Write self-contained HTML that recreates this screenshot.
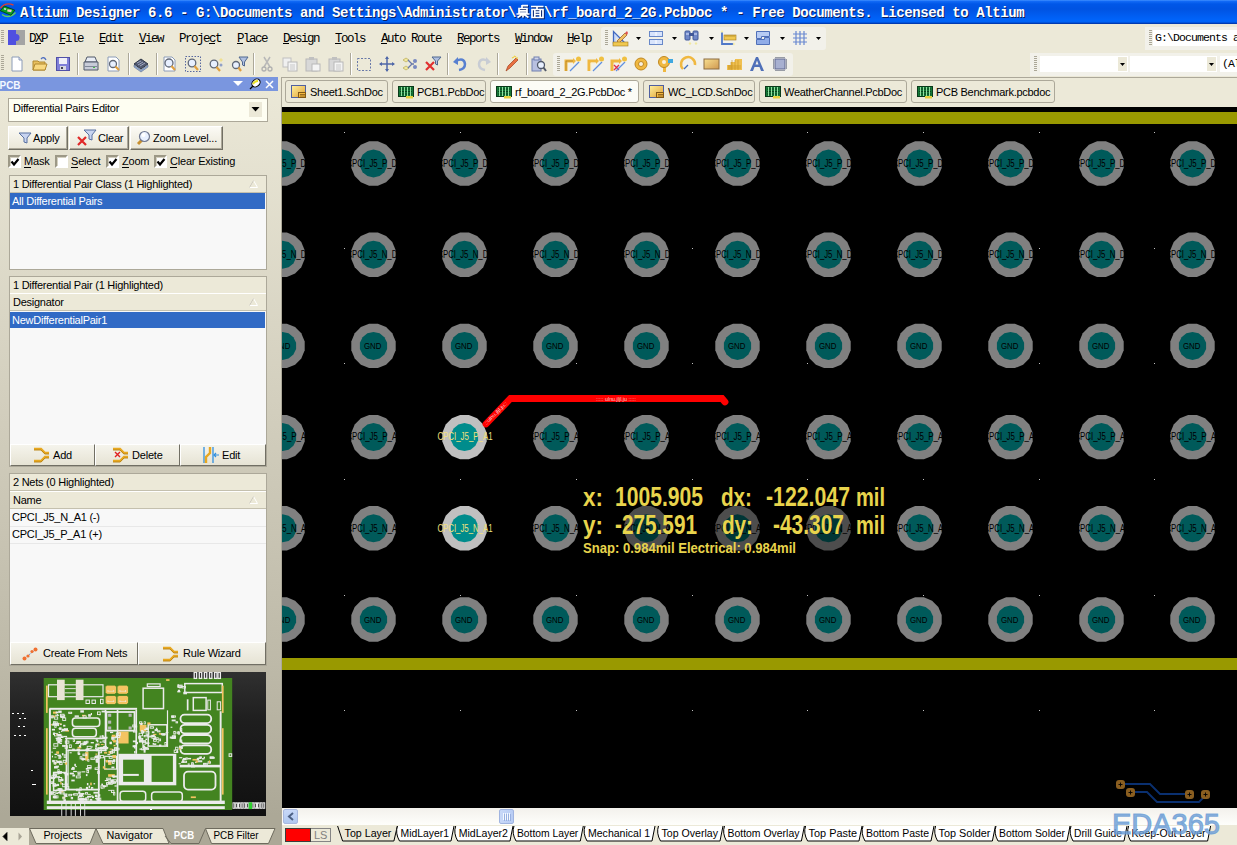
<!DOCTYPE html><html><head><meta charset="utf-8"><style>
html,body{margin:0;padding:0;width:1237px;height:845px;overflow:hidden;}
body{position:relative;background:#ECE9D8;font-family:'Liberation Sans', sans-serif;}
div{box-sizing:border-box;}
svg{position:absolute;overflow:visible;}
</style></head><body>
<div style="position:absolute;left:0px;top:0px;width:1237px;height:24px;background:linear-gradient(to bottom,#4090FF 0px,#1068F5 1.5px,#0057E8 4px,#0053E2 9px,#005CF0 15px,#0064FA 20px,#0062F6 22px,#0044C4 23px,#0030A0 24px);"></div>
<svg style="left:0;top:0" width="18" height="20" viewBox="0 0 18 20">
<path d="M0.5 8 Q6 1.5 13.5 5.2" stroke="#E04030" stroke-width="1.4" fill="none"/>
<path d="M2 14.5 Q9 19.5 15.5 12.5" stroke="#60D060" stroke-width="1.4" fill="none"/>
<path d="M0.3 10.8 L4.3 6 L14.8 10.2 L11 15.3 Z" fill="#08A020" stroke="#003000" stroke-width="0.7"/>
<path d="M4 8.2 L6.3 8.4 L6 9.8 L3.8 9.6Z" fill="#F8F0FF"/><path d="M7.5 9.3 L11.8 9.8 L11.2 12.2 L7.2 11.6Z" fill="#F8C8C8"/>
</svg>
<div style="position:absolute;left:21px;top:7px;color:#0A1E60;font:bold 14px/14px 'Liberation Mono', monospace;letter-spacing:-0.4px;white-space:pre;">Altium Designer 6.6 - G:\Documents and Settings\Administrator\<span style="display:inline-block;width:28px"></span>\rf_board_2_2G.PcbDoc * - Free Documents. Licensed to Altium</div>
<div style="position:absolute;left:20px;top:6px;color:#FFFFFF;font:bold 14px/14px 'Liberation Mono', monospace;letter-spacing:-0.4px;white-space:pre;">Altium Designer 6.6 - G:\Documents and Settings\Administrator\<span style="display:inline-block;width:28px"></span>\rf_board_2_2G.PcbDoc * - Free Documents. Licensed to Altium</div>
<svg style="left:516px;top:4px" width="30" height="16" viewBox="0 0 30 16">
<path d="M6 1V4M6 1.6H12M3 4.5H11V9H3ZM3 6.8H11M0.5 10H13.5M7 10V13.5M6 10.5L1.5 13.5M8 10.5L12.5 13.5M15 2.5H27.5M21 2.5V5M16 5.5H27V13.5H16ZM18.8 5.5V13.5M24.2 5.5V13.5M19 8H24M19 10.5H24" transform="translate(1,1)" fill="none" stroke="#0A246A" stroke-width="1.7"/>
<path d="M6 1V4M6 1.6H12M3 4.5H11V9H3ZM3 6.8H11M0.5 10H13.5M7 10V13.5M6 10.5L1.5 13.5M8 10.5L12.5 13.5M15 2.5H27.5M21 2.5V5M16 5.5H27V13.5H16ZM18.8 5.5V13.5M24.2 5.5V13.5M19 8H24M19 10.5H24" fill="none" stroke="#FFF" stroke-width="1.7"/></svg>
<svg style="left:1px;top:30px" width="3" height="15"><rect x="0" y="0" width="3" height="1" fill="#ABA797"/><rect x="0" y="2" width="3" height="1" fill="#ABA797"/><rect x="0" y="4" width="3" height="1" fill="#ABA797"/><rect x="0" y="6" width="3" height="1" fill="#ABA797"/><rect x="0" y="8" width="3" height="1" fill="#ABA797"/><rect x="0" y="10" width="3" height="1" fill="#ABA797"/><rect x="0" y="12" width="3" height="1" fill="#ABA797"/></svg>
<svg style="left:8px;top:30px" width="17" height="15" viewBox="0 0 17 15">
<rect x="0" y="0" width="8" height="15" fill="#5050E0"/><rect x="8" y="0" width="9" height="15" fill="#A4A4A4"/>
<path d="M8 4 A3.5 3.5 0 0 1 8 11 Z" fill="#5050E0"/>
</svg>
<div style="position:absolute;left:29px;top:33px;font:normal 12.5px/12px 'Liberation Mono', monospace;letter-spacing:-1.5px;color:#000;white-space:pre;">DXP</div>
<div style="position:absolute;left:35px;top:43px;width:6px;height:1px;background:#000;"></div>
<div style="position:absolute;left:59px;top:33px;font:normal 12.5px/12px 'Liberation Mono', monospace;letter-spacing:-1.5px;color:#000;white-space:pre;">File</div>
<div style="position:absolute;left:59px;top:43px;width:6px;height:1px;background:#000;"></div>
<div style="position:absolute;left:99px;top:33px;font:normal 12.5px/12px 'Liberation Mono', monospace;letter-spacing:-1.5px;color:#000;white-space:pre;">Edit</div>
<div style="position:absolute;left:99px;top:43px;width:6px;height:1px;background:#000;"></div>
<div style="position:absolute;left:139px;top:33px;font:normal 12.5px/12px 'Liberation Mono', monospace;letter-spacing:-1.5px;color:#000;white-space:pre;">View</div>
<div style="position:absolute;left:139px;top:43px;width:6px;height:1px;background:#000;"></div>
<div style="position:absolute;left:179px;top:33px;font:normal 12.5px/12px 'Liberation Mono', monospace;letter-spacing:-1.5px;color:#000;white-space:pre;">Project</div>
<div style="position:absolute;left:209px;top:43px;width:6px;height:1px;background:#000;"></div>
<div style="position:absolute;left:237px;top:33px;font:normal 12.5px/12px 'Liberation Mono', monospace;letter-spacing:-1.5px;color:#000;white-space:pre;">Place</div>
<div style="position:absolute;left:237px;top:43px;width:6px;height:1px;background:#000;"></div>
<div style="position:absolute;left:283px;top:33px;font:normal 12.5px/12px 'Liberation Mono', monospace;letter-spacing:-1.5px;color:#000;white-space:pre;">Design</div>
<div style="position:absolute;left:283px;top:43px;width:6px;height:1px;background:#000;"></div>
<div style="position:absolute;left:335px;top:33px;font:normal 12.5px/12px 'Liberation Mono', monospace;letter-spacing:-1.5px;color:#000;white-space:pre;">Tools</div>
<div style="position:absolute;left:335px;top:43px;width:6px;height:1px;background:#000;"></div>
<div style="position:absolute;left:381px;top:33px;font:normal 12.5px/12px 'Liberation Mono', monospace;letter-spacing:-1.5px;color:#000;white-space:pre;">Auto Route</div>
<div style="position:absolute;left:381px;top:43px;width:6px;height:1px;background:#000;"></div>
<div style="position:absolute;left:457px;top:33px;font:normal 12.5px/12px 'Liberation Mono', monospace;letter-spacing:-1.5px;color:#000;white-space:pre;">Reports</div>
<div style="position:absolute;left:457px;top:43px;width:6px;height:1px;background:#000;"></div>
<div style="position:absolute;left:515px;top:33px;font:normal 12.5px/12px 'Liberation Mono', monospace;letter-spacing:-1.5px;color:#000;white-space:pre;">Window</div>
<div style="position:absolute;left:515px;top:43px;width:6px;height:1px;background:#000;"></div>
<div style="position:absolute;left:567px;top:33px;font:normal 12.5px/12px 'Liberation Mono', monospace;letter-spacing:-1.5px;color:#000;white-space:pre;">Help</div>
<div style="position:absolute;left:567px;top:43px;width:6px;height:1px;background:#000;"></div>
<svg style="left:1px;top:55px" width="3" height="16"><rect x="0" y="0" width="3" height="1" fill="#ABA797"/><rect x="0" y="2" width="3" height="1" fill="#ABA797"/><rect x="0" y="4" width="3" height="1" fill="#ABA797"/><rect x="0" y="6" width="3" height="1" fill="#ABA797"/><rect x="0" y="8" width="3" height="1" fill="#ABA797"/><rect x="0" y="10" width="3" height="1" fill="#ABA797"/><rect x="0" y="12" width="3" height="1" fill="#ABA797"/><rect x="0" y="14" width="3" height="1" fill="#ABA797"/></svg>
<svg width="0" height="0" style="left:0;top:0"><defs><linearGradient id="gfill" x1="0" y1="0" x2="1" y2="1"><stop offset="0" stop-color="#F8E090"/><stop offset="1" stop-color="#D09850"/></linearGradient></defs></svg>
<svg style="left:9px;top:56px" width="16" height="16" viewBox="0 0 16 16"><path d="M3 1H10L13 4V15H3Z" fill="#FFF" stroke="#8C9CB8" stroke-width="1"/><path d="M10 1V4H13" fill="#DDE" stroke="#8C9CB8"/></svg>
<svg style="left:32px;top:56px" width="16" height="16" viewBox="0 0 16 16"><path d="M1 5H6L7 6H13V14H1Z" fill="#E8C060" stroke="#B08830"/><path d="M3 8H15L13 14H1Z" fill="#F8D880" stroke="#B08830"/><path d="M9 3Q12 0 14 4" stroke="#5070C0" fill="none" stroke-width="1.3"/></svg>
<svg style="left:55px;top:56px" width="16" height="16" viewBox="0 0 16 16"><rect x="1.5" y="1.5" width="13" height="13" fill="#8080D8" stroke="#5050A8"/><rect x="4" y="2" width="8" height="6" fill="#F0F0F8"/><rect x="5" y="10" width="6" height="4" fill="#D8D8E0"/><rect x="6" y="11" width="2" height="2" fill="#404050"/></svg>
<div style="position:absolute;left:77px;top:53px;width:2px;height:22px;border-left:1px solid #ACA899;border-right:1px solid #FFFFFF;"></div>
<svg style="left:83px;top:56px" width="16" height="16" viewBox="0 0 16 16"><path d="M4 1H12L14 6H2Z" fill="#E8ECF4" stroke="#505868"/><path d="M1 6H15V14H1Z" fill="#C8CCD8" stroke="#505868"/><rect x="2" y="10" width="12" height="1" fill="#808898"/><rect x="10" y="11" width="2" height="1" fill="#40C040"/></svg>
<svg style="left:106px;top:56px" width="16" height="16" viewBox="0 0 16 16"><path d="M2 1H10L13 4V15H2Z" fill="#FFF" stroke="#8C9CB8"/><circle cx="7" cy="8" r="3.5" fill="#E8F0FF" stroke="#606878" stroke-width="1.3"/><path d="M9.5 10.5L13 14" stroke="#E0A040" stroke-width="2.2"/></svg>
<div style="position:absolute;left:128px;top:53px;width:2px;height:22px;border-left:1px solid #ACA899;border-right:1px solid #FFFFFF;"></div>
<svg style="left:133px;top:56px" width="16" height="16" viewBox="0 0 16 16"><path d="M1 8L8 3L15 8L8 13Z" fill="#505870" stroke="#303848"/><path d="M1 9L8 14L15 9V11L8 16L1 11Z" fill="#90A8D0" stroke="#607090" stroke-width="0.6"/><path d="M4 7L8 5M5 9L10 6M7 10L12 7" stroke="#A0A8C0"/></svg>
<div style="position:absolute;left:156px;top:53px;width:2px;height:22px;border-left:1px solid #ACA899;border-right:1px solid #FFFFFF;"></div>
<svg style="left:162px;top:56px" width="16" height="16" viewBox="0 0 16 16"><path d="M2 1H10L13 4V15H2Z" fill="#FFF" stroke="#8C9CB8"/><circle cx="7" cy="7" r="4" fill="#E8F0FF" stroke="#606878" stroke-width="1.3"/><path d="M9.5 10L13 14" stroke="#E0A040" stroke-width="2.2"/></svg>
<svg style="left:185px;top:56px" width="16" height="16" viewBox="0 0 16 16"><rect x="0.5" y="0.5" width="15" height="15" fill="none" stroke="#5868A0" stroke-dasharray="1.5 1.5"/><circle cx="7" cy="7" r="3.8" fill="#E8F0FF" stroke="#606878" stroke-width="1.3"/><path d="M9.5 10L13 14" stroke="#E0A040" stroke-width="2.2"/></svg>
<svg style="left:208px;top:56px" width="16" height="16" viewBox="0 0 16 16"><circle cx="6" cy="8" r="3.8" fill="#E8F0FF" stroke="#606878" stroke-width="1.3"/><path d="M8.5 11L12 15" stroke="#E0A040" stroke-width="2.2"/><path d="M13 2L15 4L13 6L11 4Z" fill="#F0E090"/><circle cx="13" cy="9" r="1.5" fill="#90A0C8"/></svg>
<svg style="left:231px;top:56px" width="16" height="16" viewBox="0 0 16 16"><circle cx="5" cy="9" r="3.5" fill="#E8F0FF" stroke="#606878" stroke-width="1.3"/><path d="M7.5 11.5L10 15" stroke="#E0A040" stroke-width="2.2"/><path d="M8 1H17L13.5 6V10L11.5 9V6Z" fill="#B0C0E0" stroke="#506890"/></svg>
<div style="position:absolute;left:253px;top:53px;width:2px;height:22px;border-left:1px solid #ACA899;border-right:1px solid #FFFFFF;"></div>
<svg style="left:259px;top:56px" width="16" height="16" viewBox="0 0 16 16"><path d="M5 1L11 11M11 1L5 11" stroke="#B8B8B8" stroke-width="1.5"/><circle cx="5" cy="13" r="2" fill="none" stroke="#B0B0B0" stroke-width="1.3"/><circle cx="11" cy="13" r="2" fill="none" stroke="#B0B0B0" stroke-width="1.3"/></svg>
<svg style="left:282px;top:56px" width="16" height="16" viewBox="0 0 16 16"><rect x="1" y="2" width="8" height="9" fill="#F0F0F0" stroke="#C0C0C0"/><rect x="6" y="6" width="9" height="9" fill="#F4F4F4" stroke="#B8B8B8"/><path d="M8 9H13M8 11H13M8 13H13" stroke="#C8C8C8"/></svg>
<svg style="left:305px;top:56px" width="16" height="16" viewBox="0 0 16 16"><rect x="1" y="3" width="11" height="12" fill="#D8D8D8" stroke="#B8B8B8"/><rect x="4" y="1" width="5" height="3" fill="#C0C0C0"/><rect x="7" y="8" width="8" height="7" fill="#F4F4F4" stroke="#B8B8B8"/></svg>
<svg style="left:328px;top:56px" width="16" height="16" viewBox="0 0 16 16"><rect x="1" y="3" width="11" height="12" fill="#D8D8D8" stroke="#B8B8B8"/><rect x="4" y="1" width="5" height="3" fill="#C0C0C0"/><rect x="6" y="6" width="9" height="9" fill="#F4F4F4" stroke="#B8B8B8"/><path d="M8 9H13M8 11H13M8 13H13" stroke="#C8C8C8"/></svg>
<div style="position:absolute;left:350px;top:53px;width:2px;height:22px;border-left:1px solid #ACA899;border-right:1px solid #FFFFFF;"></div>
<svg style="left:356px;top:56px" width="16" height="16" viewBox="0 0 16 16"><rect x="1.5" y="2.5" width="13" height="12" fill="none" stroke="#6878A8" stroke-dasharray="2 1.5"/></svg>
<svg style="left:379px;top:56px" width="16" height="16" viewBox="0 0 16 16"><path d="M8 1V15M1 8H15" stroke="#5068A8" stroke-width="1.5"/><path d="M8 0L6 3H10ZM8 16L6 13H10ZM0 8L3 6V10ZM16 8L13 6V10Z" fill="#5068A8"/></svg>
<svg style="left:402px;top:56px" width="16" height="16" viewBox="0 0 16 16"><path d="M1 4L4 2L7 4L4 6ZM1 12L4 10L7 12L4 14Z" fill="#F0E8A0" stroke="#B0A040" stroke-width="0.6"/><path d="M6 4L10 8L6 12M10 8H12" stroke="#6878A8" stroke-width="1.3" fill="none"/><circle cx="13" cy="5" r="2" fill="#7888C0"/><circle cx="13" cy="11" r="2" fill="#7888C0"/></svg>
<svg style="left:425px;top:56px" width="16" height="16" viewBox="0 0 16 16"><path d="M1 6L9 14M9 6L1 14" stroke="#E03030" stroke-width="2.2"/><path d="M7 1H16L12.5 5V9L10.5 8V5Z" fill="#B0C0E0" stroke="#506890"/></svg>
<div style="position:absolute;left:447px;top:53px;width:2px;height:22px;border-left:1px solid #ACA899;border-right:1px solid #FFFFFF;"></div>
<svg style="left:452px;top:56px" width="16" height="16" viewBox="0 0 16 16"><path d="M4 5Q12 1 13 8Q13 13 7 14" stroke="#5880D0" stroke-width="2.5" fill="none"/><path d="M1 6L6 1V9Z" fill="#5880D0"/></svg>
<svg style="left:476px;top:56px" width="16" height="16" viewBox="0 0 16 16"><path d="M12 5Q4 1 3 8Q3 13 9 14" stroke="#C8CCD4" stroke-width="2.5" fill="none"/><path d="M15 6L10 1V9Z" fill="#C8CCD4"/></svg>
<div style="position:absolute;left:497px;top:53px;width:2px;height:22px;border-left:1px solid #ACA899;border-right:1px solid #FFFFFF;"></div>
<svg style="left:504px;top:56px" width="16" height="16" viewBox="0 0 16 16"><path d="M2 15L4 10L12 2L14 4L6 12Z" fill="#E87040" stroke="#A04020" stroke-width="0.7"/><path d="M10 0L12 1M13 1V3M8 2L10 1" stroke="#F0D040" stroke-width="1.2"/></svg>
<div style="position:absolute;left:526px;top:53px;width:2px;height:22px;border-left:1px solid #ACA899;border-right:1px solid #FFFFFF;"></div>
<svg style="left:531px;top:56px" width="16" height="16" viewBox="0 0 16 16"><rect x="1" y="3" width="9" height="12" fill="#B8C0E0" stroke="#7080B0"/><rect x="3" y="1" width="5" height="3" fill="#D0D4E8" stroke="#7080B0"/><circle cx="10" cy="9" r="3.5" fill="#E8F0FF" stroke="#505868" stroke-width="1.3"/><path d="M12.5 11.5L15 15" stroke="#505868" stroke-width="2"/></svg>
<div style="position:absolute;left:553px;top:53px;width:240px;height:23px;background:#F2F1EA;border-radius:3px;"></div>
<svg style="left:557px;top:56px" width="3" height="16"><rect x="0" y="0" width="3" height="1" fill="#ABA797"/><rect x="0" y="2" width="3" height="1" fill="#ABA797"/><rect x="0" y="4" width="3" height="1" fill="#ABA797"/><rect x="0" y="6" width="3" height="1" fill="#ABA797"/><rect x="0" y="8" width="3" height="1" fill="#ABA797"/><rect x="0" y="10" width="3" height="1" fill="#ABA797"/><rect x="0" y="12" width="3" height="1" fill="#ABA797"/><rect x="0" y="14" width="3" height="1" fill="#ABA797"/></svg>
<svg style="left:564px;top:56px" width="16" height="16" viewBox="0 0 16 16"><path d="M2 15V5H10" stroke="#F0B840" stroke-width="3" fill="none"/><path d="M2 15V5H10" stroke="#A07020" stroke-width="0.6" fill="none"/><path d="M9 2L12 5L9 8Z" fill="#F0B840"/><path d="M6 15L15 6" stroke="#6090E0" stroke-width="1.3"/><circle cx="14.5" cy="3" r="2.5" fill="#F0C040"/></svg>
<svg style="left:587px;top:56px" width="16" height="16" viewBox="0 0 16 16"><path d="M2 15V5H10" stroke="#F0B840" stroke-width="3" fill="none"/><path d="M4 15V7H8" stroke="#FFF0C0" stroke-width="0.8" fill="none"/><path d="M9 2L12 5L9 8Z" fill="#F0B840"/><path d="M6 15L15 6" stroke="#6090E0" stroke-width="1.3"/><circle cx="14.5" cy="3" r="2.5" fill="#F0C040"/></svg>
<svg style="left:610px;top:56px" width="16" height="16" viewBox="0 0 16 16"><path d="M2 15V5H10" stroke="#F0B840" stroke-width="3" fill="none"/><path d="M9 2L12 5L9 8Z" fill="#F0B840"/><path d="M4 9L9 14M9 9L4 14" stroke="#E03050" stroke-width="1.3"/><path d="M6 15L15 6" stroke="#6090E0" stroke-width="1.3"/><circle cx="14.5" cy="3" r="2.5" fill="#F0C040"/></svg>
<svg style="left:633px;top:56px" width="16" height="16" viewBox="0 0 16 16"><circle cx="8" cy="8" r="6" fill="#F0B840" stroke="#C08820"/><circle cx="8" cy="8" r="2.5" fill="#F8F0E0" stroke="#C08820"/></svg>
<svg style="left:656px;top:56px" width="16" height="16" viewBox="0 0 16 16"><rect x="7" y="9" width="3" height="7" fill="#F0B840"/><circle cx="8" cy="6" r="5.5" fill="#F0B840" stroke="#C08820"/><circle cx="8" cy="6" r="2" fill="#F8F0E0"/><rect x="12" y="3" width="5" height="4" fill="#40A8E0"/></svg>
<svg style="left:680px;top:56px" width="16" height="16" viewBox="0 0 16 16"><path d="M3 13A7 7 0 1 1 15 9" stroke="#F0B840" stroke-width="2.5" fill="none"/><path d="M8 9L4 13" stroke="#4070C0" stroke-width="1.3"/></svg>
<svg style="left:703px;top:56px" width="16" height="16" viewBox="0 0 16 16"><rect x="1" y="3" width="15" height="10" fill="url(#gfill)" stroke="#8C6C40"/></svg>
<svg style="left:726px;top:56px" width="16" height="16" viewBox="0 0 16 16"><path d="M1 14V9H5V6H9V3H16V14Z" fill="#F0C050"/><path d="M2 10H15M2 12H15M6 4V14M9 4V14M12 4V14M3 9V14M5 6V14" stroke="#C89020" stroke-width="0.6"/></svg>
<svg style="left:749px;top:56px" width="16" height="16" viewBox="0 0 16 16"><path d="M1 15L7 1H9L15 15H12L10.5 11H5.5L4 15ZM6.5 8.5H9.5L8 4.5Z" fill="#5070B8"/></svg>
<svg style="left:772px;top:56px" width="16" height="16" viewBox="0 0 16 16"><rect x="3" y="3" width="10" height="10" fill="#A8B0D0" stroke="#606890"/><path d="M4 1V2M6 1V2M8 1V2M10 1V2M12 1V2M4 14V15M6 14V15M8 14V15M10 14V15M12 14V15M1 4H2M1 6H2M1 8H2M1 10H2M1 12H2M14 4H15M14 6H15M14 8H15M14 10H15M14 12H15" stroke="#404860"/></svg>
<div style="position:absolute;left:601px;top:27px;width:225px;height:23px;background:#F2F1EA;border-radius:3px;"></div>
<svg style="left:605px;top:30px" width="3" height="16"><rect x="0" y="0" width="3" height="1" fill="#ABA797"/><rect x="0" y="2" width="3" height="1" fill="#ABA797"/><rect x="0" y="4" width="3" height="1" fill="#ABA797"/><rect x="0" y="6" width="3" height="1" fill="#ABA797"/><rect x="0" y="8" width="3" height="1" fill="#ABA797"/><rect x="0" y="10" width="3" height="1" fill="#ABA797"/><rect x="0" y="12" width="3" height="1" fill="#ABA797"/><rect x="0" y="14" width="3" height="1" fill="#ABA797"/></svg>
<svg style="left:612px;top:30px" width="16" height="16" viewBox="0 0 16 16"><path d="M1.5 1.5V13.5H13.5Z" fill="#C8D8F8" stroke="#4068C0" stroke-width="1.3"/><path d="M4 7V11H8Z" fill="#ECE9D8"/><path d="M5 11L13 3L15 5L7 13Z" fill="#F0C060" stroke="#905020" stroke-width="0.7"/><path d="M13 3L15 1L16 3L15 5Z" fill="#E05050"/><rect x="1" y="12" width="15" height="4" fill="#F0C850" stroke="#A07820" stroke-width="0.6"/></svg>
<svg style="left:636px;top:37px" width="5" height="3"><path d="M0 0H5L2.5 3Z" fill="#000"/></svg>
<svg style="left:648px;top:30px" width="16" height="16" viewBox="0 0 16 16"><rect x="1.5" y="1.5" width="13" height="5" fill="#D8E4FC" stroke="#6888C8"/><rect x="1.5" y="9.5" width="13" height="5" fill="#D8E4FC" stroke="#6888C8"/><path d="M8 2V6M8 10V14" stroke="#FFF"/></svg>
<svg style="left:672px;top:37px" width="5" height="3"><path d="M0 0H5L2.5 3Z" fill="#000"/></svg>
<svg style="left:684px;top:30px" width="16" height="16" viewBox="0 0 16 16"><rect x="1" y="1" width="5" height="9" rx="1" fill="#7088C8" stroke="#405898"/><rect x="9" y="1" width="5" height="9" rx="1" fill="#7088C8" stroke="#405898"/><rect x="5" y="3" width="5" height="3" fill="#405898"/><path d="M2 4H5M10 4H13" stroke="#E0E8FF"/><path d="M6 12L7.5 13.5L6 15L4.5 13.5ZM12 12L13.5 13.5L12 15L10.5 13.5Z" fill="#F0E8A0"/></svg>
<svg style="left:709px;top:37px" width="5" height="3"><path d="M0 0H5L2.5 3Z" fill="#000"/></svg>
<svg style="left:720px;top:30px" width="16" height="16" viewBox="0 0 16 16"><path d="M2 2V14H14" stroke="#5078C8" stroke-width="1.8" fill="none"/><rect x="4" y="5" width="12" height="5" fill="#F0C850" stroke="#A07820" stroke-width="0.6"/><path d="M6 5V7M8 5V7M10 5V7M12 5V7M14 5V7" stroke="#A07820" stroke-width="0.6"/><path d="M2 0L3.5 1.5L2 3L0.5 1.5ZM14 12.5L15.5 14L14 15.5L12.5 14Z" fill="#F8F0B0"/></svg>
<svg style="left:744px;top:37px" width="5" height="3"><path d="M0 0H5L2.5 3Z" fill="#000"/></svg>
<svg style="left:755px;top:30px" width="16" height="16" viewBox="0 0 16 16"><path d="M1.5 1.5H14.5V6.5H6.5V8.5H1.5Z" fill="#B8CCF4" stroke="#5070B8"/><path d="M14.5 7.5V14.5H1.5V9.5H9.5V7.5Z" fill="#90ACE8" stroke="#5070B8"/></svg>
<svg style="left:780px;top:37px" width="5" height="3"><path d="M0 0H5L2.5 3Z" fill="#000"/></svg>
<svg style="left:792px;top:30px" width="16" height="16" viewBox="0 0 16 16"><path d="M1 4H15M1 8H15M1 12H15M4 1V15M8 1V15M12 1V15" stroke="#6888D0" stroke-width="1.2"/></svg>
<svg style="left:816px;top:37px" width="5" height="3"><path d="M0 0H5L2.5 3Z" fill="#000"/></svg>
<div style="position:absolute;left:1145px;top:27px;width:92px;height:23px;background:#F2F1EA;"></div>
<svg style="left:1149px;top:30px" width="3" height="16"><rect x="0" y="0" width="3" height="1" fill="#ABA797"/><rect x="0" y="2" width="3" height="1" fill="#ABA797"/><rect x="0" y="4" width="3" height="1" fill="#ABA797"/><rect x="0" y="6" width="3" height="1" fill="#ABA797"/><rect x="0" y="8" width="3" height="1" fill="#ABA797"/><rect x="0" y="10" width="3" height="1" fill="#ABA797"/><rect x="0" y="12" width="3" height="1" fill="#ABA797"/><rect x="0" y="14" width="3" height="1" fill="#ABA797"/></svg>
<div style="position:absolute;left:1153px;top:30px;width:84px;height:16px;background:#FFFFFF;"></div>
<div style="position:absolute;left:1155px;top:32px;font:normal 11.5px/12px 'Liberation Mono', monospace;letter-spacing:-0.9px;color:#000;white-space:pre;">G:\Documents a</div>
<div style="position:absolute;left:1030px;top:53px;width:207px;height:23px;background:#F2F1EA;"></div>
<svg style="left:1034px;top:56px" width="3" height="16"><rect x="0" y="0" width="3" height="1" fill="#ABA797"/><rect x="0" y="2" width="3" height="1" fill="#ABA797"/><rect x="0" y="4" width="3" height="1" fill="#ABA797"/><rect x="0" y="6" width="3" height="1" fill="#ABA797"/><rect x="0" y="8" width="3" height="1" fill="#ABA797"/><rect x="0" y="10" width="3" height="1" fill="#ABA797"/><rect x="0" y="12" width="3" height="1" fill="#ABA797"/><rect x="0" y="14" width="3" height="1" fill="#ABA797"/></svg>
<div style="position:absolute;left:1040px;top:56px;width:88px;height:16px;background:#FFFFFF;"></div>
<div style="position:absolute;left:1118px;top:57px;width:9px;height:14px;background:#ECE9D8;"></div>
<svg style="left:1120px;top:63px" width="5" height="3"><path d="M0 0H5L2.5 3Z" fill="#000"/></svg>
<div style="position:absolute;left:1130px;top:56px;width:87px;height:16px;background:#FFFFFF;"></div>
<div style="position:absolute;left:1207px;top:57px;width:9px;height:14px;background:#ECE9D8;"></div>
<svg style="left:1209px;top:63px" width="5" height="3"><path d="M0 0H5L2.5 3Z" fill="#000"/></svg>
<div style="position:absolute;left:1220px;top:56px;width:17px;height:16px;background:#FFFFFF;"></div>
<div style="position:absolute;left:1222px;top:58px;font:normal 11.5px/12px 'Liberation Mono', monospace;letter-spacing:-0.9px;color:#000;white-space:pre;">(Al</div>
<div style="position:absolute;left:282px;top:77px;width:955px;height:1px;background:#ACA899;"></div>
<div style="position:absolute;left:0px;top:77px;width:282px;height:768px;background:linear-gradient(to bottom,#ECE9D8 0px,#D3CFBE 323px,#BDB9A8 588px,#ACA897 739px);"></div>
<div style="position:absolute;left:281px;top:77px;width:1px;height:768px;background:#ACA899;"></div>
<div style="position:absolute;left:0px;top:77px;width:278px;height:14px;background:#7A96DF;"></div>
<svg style="left:0;top:0" width="40" height="100"><text x="-0.5" y="89" font-family="Liberation Sans" font-weight="bold" font-size="11.5" fill="#F4F8FF" textLength="21" lengthAdjust="spacingAndGlyphs">PCB</text></svg>
<svg style="left:232px;top:80px" width="12" height="8"><path d="M1 1H11L6 6Z" fill="#FFF"/></svg>
<svg style="left:249px;top:78px" width="12" height="12" viewBox="0 0 12 12"><path d="M1 11L4 8" stroke="#000" stroke-width="1.2"/><ellipse cx="7" cy="5" rx="4.5" ry="3.5" transform="rotate(-40 7 5)" fill="#FFF" stroke="#000" stroke-width="1"/><path d="M4 6 Q6 3 9 3" stroke="#E8E020" stroke-width="2" fill="none"/></svg>
<svg style="left:265px;top:80px" width="10" height="10"><path d="M1 1L8 8M8 1L1 8" stroke="#FFF" stroke-width="1.5"/></svg>
<div style="position:absolute;left:8px;top:98px;width:260px;height:24px;background:#FEFEF2;border:1px solid #ACA899;"></div>
<div style="position:absolute;left:249px;top:102px;width:13px;height:15px;background:#ECE9D8;"></div>
<svg style="left:251px;top:107px" width="9" height="5"><path d="M0.5 0H8.5L4.5 4.5Z" fill="#000"/></svg>
<div style="position:absolute;left:13px;top:103px;font:normal 11px/11px 'Liberation Sans', sans-serif;color:#000;white-space:nowrap;letter-spacing:-0.25px;">Differential Pairs Editor</div>
<div style="position:absolute;left:8px;top:126px;width:60px;height:24px;background:linear-gradient(to bottom,#FBFAF5,#EAE7D8);border:1px solid;border-color:#FFFFFF #716F64 #716F64 #FFFFFF;box-shadow:inset -1px -1px 0 #ACA899;"></div><svg style="left:18px;top:131px" width="14" height="14"><path d="M1 2H13L9 7V12L6 11V7Z" fill="#C8D4F0" stroke="#5870A0"/></svg><div style="position:absolute;left:33px;top:133px;font:normal 11px/11px 'Liberation Sans', sans-serif;color:#000;white-space:nowrap;letter-spacing:-0.2px;">Apply</div>
<div style="position:absolute;left:69px;top:126px;width:60px;height:24px;background:linear-gradient(to bottom,#FBFAF5,#EAE7D8);border:1px solid;border-color:#FFFFFF #716F64 #716F64 #FFFFFF;box-shadow:inset -1px -1px 0 #ACA899;"></div><svg style="left:76px;top:129px" width="22" height="18"><path d="M2 8L10 16M10 8L2 16" stroke="#E02828" stroke-width="2.2"/><path d="M8 1H20L16 6V11L13 10V6Z" fill="#C8D4F0" stroke="#5870A0"/></svg><div style="position:absolute;left:98px;top:133px;font:normal 11px/11px 'Liberation Sans', sans-serif;color:#000;white-space:nowrap;letter-spacing:-0.2px;">Clear</div>
<div style="position:absolute;left:130px;top:126px;width:93px;height:24px;background:linear-gradient(to bottom,#FBFAF5,#EAE7D8);border:1px solid;border-color:#FFFFFF #716F64 #716F64 #FFFFFF;box-shadow:inset -1px -1px 0 #ACA899;"></div><svg style="left:135px;top:130px" width="16" height="16"><path d="M3 14L7 10" stroke="#C89030" stroke-width="3"/><circle cx="9.5" cy="6.5" r="5" fill="#E8F0FF" stroke="#707890" stroke-width="1.2"/><circle cx="8.5" cy="5" r="2" fill="#FFF"/></svg><div style="position:absolute;left:153px;top:133px;font:normal 11px/11px 'Liberation Sans', sans-serif;color:#000;white-space:nowrap;letter-spacing:-0.2px;">Zoom Level...</div>
<div style="position:absolute;left:8px;top:155px;width:13px;height:13px;background:#FFFFFF;border:2px solid;border-color:#9C9886 #FFFFFF #FFFFFF #9C9886;box-shadow:inset 1px 1px 0 #D4D0C0;"></div><svg style="left:10px;top:157px" width="10" height="10"><path d="M1.5 4.5L4 7.5L8.5 2" stroke="#000" stroke-width="2.2" fill="none"/></svg>
<div style="position:absolute;left:24px;top:156px;font:normal 11px/11px 'Liberation Sans', sans-serif;color:#000;white-space:nowrap;letter-spacing:-0.2px;">Mask</div>
<div style="position:absolute;left:24px;top:167px;width:7px;height:1px;background:#000;"></div>
<div style="position:absolute;left:55px;top:155px;width:13px;height:13px;background:#FFFFFF;border:2px solid;border-color:#9C9886 #FFFFFF #FFFFFF #9C9886;box-shadow:inset 1px 1px 0 #D4D0C0;"></div>
<div style="position:absolute;left:71px;top:156px;font:normal 11px/11px 'Liberation Sans', sans-serif;color:#000;white-space:nowrap;letter-spacing:-0.2px;">Select</div>
<div style="position:absolute;left:71px;top:167px;width:7px;height:1px;background:#000;"></div>
<div style="position:absolute;left:106px;top:155px;width:13px;height:13px;background:#FFFFFF;border:2px solid;border-color:#9C9886 #FFFFFF #FFFFFF #9C9886;box-shadow:inset 1px 1px 0 #D4D0C0;"></div><svg style="left:108px;top:157px" width="10" height="10"><path d="M1.5 4.5L4 7.5L8.5 2" stroke="#000" stroke-width="2.2" fill="none"/></svg>
<div style="position:absolute;left:122px;top:156px;font:normal 11px/11px 'Liberation Sans', sans-serif;color:#000;white-space:nowrap;letter-spacing:-0.2px;">Zoom</div>
<div style="position:absolute;left:122px;top:167px;width:7px;height:1px;background:#000;"></div>
<div style="position:absolute;left:154px;top:155px;width:13px;height:13px;background:#FFFFFF;border:2px solid;border-color:#9C9886 #FFFFFF #FFFFFF #9C9886;box-shadow:inset 1px 1px 0 #D4D0C0;"></div><svg style="left:156px;top:157px" width="10" height="10"><path d="M1.5 4.5L4 7.5L8.5 2" stroke="#000" stroke-width="2.2" fill="none"/></svg>
<div style="position:absolute;left:170px;top:156px;font:normal 11px/11px 'Liberation Sans', sans-serif;color:#000;white-space:nowrap;letter-spacing:-0.2px;">Clear Existing</div>
<div style="position:absolute;left:170px;top:167px;width:7px;height:1px;background:#000;"></div>
<div style="position:absolute;left:9px;top:175px;width:258px;height:95px;background:#F8F8F8;border:1px solid #ACA899;"></div><div style="position:absolute;left:10px;top:176px;width:256px;height:17px;background:#ECE9D8;border-bottom:1px solid #C4C0AE;"></div><div style="position:absolute;left:13px;top:179px;font:normal 11px/11px 'Liberation Sans', sans-serif;color:#000;white-space:nowrap;letter-spacing:-0.25px;">1 Differential Pair Class (1 Highlighted)</div>
<svg style="left:249px;top:180px" width="9" height="8"><path d="M4.5 0.5L8.5 7.5H0.5Z" fill="none" stroke="#FFFFFF" stroke-width="1"/><path d="M4.5 0.5L0.5 7.5" stroke="#C8C4B4"/></svg>
<div style="position:absolute;left:10px;top:193px;width:255px;height:16px;background:#316AC5;"></div><div style="position:absolute;left:12px;top:196px;font:normal 11px/11px 'Liberation Sans', sans-serif;color:#FFFFFF;white-space:nowrap;letter-spacing:-0.25px;">All Differential Pairs</div>
<div style="position:absolute;left:9px;top:276px;width:258px;height:191px;background:#F8F8F8;border:1px solid #ACA899;"></div><div style="position:absolute;left:10px;top:277px;width:256px;height:17px;background:#ECE9D8;border-bottom:1px solid #C4C0AE;"></div><div style="position:absolute;left:13px;top:280px;font:normal 11px/11px 'Liberation Sans', sans-serif;color:#000;white-space:nowrap;letter-spacing:-0.25px;">1 Differential Pair (1 Highlighted)</div>
<div style="position:absolute;left:10px;top:293px;width:256px;height:18px;background:#ECE9D8;border-top:1px solid #FFFFFF;border-bottom:1px solid #C4C0AE;"></div><div style="position:absolute;left:13px;top:297px;font:normal 11px/11px 'Liberation Sans', sans-serif;color:#000;white-space:nowrap;letter-spacing:-0.25px;">Designator</div><svg style="left:249px;top:298px" width="9" height="8"><path d="M4.5 0.5L8.5 7.5H0.5Z" fill="none" stroke="#FFFFFF" stroke-width="1"/><path d="M4.5 0.5L0.5 7.5" stroke="#C8C4B4"/></svg>
<div style="position:absolute;left:10px;top:312px;width:255px;height:16px;background:#316AC5;"></div><div style="position:absolute;left:12px;top:315px;font:normal 11px/11px 'Liberation Sans', sans-serif;color:#FFFFFF;white-space:nowrap;letter-spacing:-0.25px;">NewDifferentialPair1</div>
<div style="position:absolute;left:10px;top:444px;width:85px;height:22px;background:linear-gradient(to bottom,#F5F4EC,#E6E3D4);border:1px solid;border-color:#FFFFFF #716F64 #716F64 #FFFFFF;"></div><svg style="left:34px;top:447px" width="16" height="16" viewBox="0 0 16 16"><path d="M0 2H7L11 6H15M0 14H7L11 10H15" stroke="#E8A820" stroke-width="2.4" fill="none"/><path d="M0 3H7L11 7H15M0 15H7L11 11H15" stroke="#A07010" stroke-width="0.6" fill="none"/></svg><div style="position:absolute;left:53px;top:450px;font:normal 11px/11px 'Liberation Sans', sans-serif;color:#000;white-space:nowrap;letter-spacing:-0.2px;">Add</div>
<div style="position:absolute;left:95px;top:444px;width:85px;height:22px;background:linear-gradient(to bottom,#F5F4EC,#E6E3D4);border:1px solid;border-color:#FFFFFF #716F64 #716F64 #FFFFFF;"></div><svg style="left:113px;top:447px" width="16" height="16" viewBox="0 0 16 16"><path d="M0 2H7L11 6H15M0 14H7L11 10H15" stroke="#E8A820" stroke-width="2.4" fill="none"/><path d="M0 3H7L11 7H15M0 15H7L11 11H15" stroke="#A07010" stroke-width="0.6" fill="none"/></svg><svg style="left:114px;top:451px" width="7" height="7"><path d="M1 1L6 6M6 1L1 6" stroke="#E02020" stroke-width="1.4"/></svg><div style="position:absolute;left:132px;top:450px;font:normal 11px/11px 'Liberation Sans', sans-serif;color:#000;white-space:nowrap;letter-spacing:-0.2px;">Delete</div>
<div style="position:absolute;left:180px;top:444px;width:86px;height:22px;background:linear-gradient(to bottom,#F5F4EC,#E6E3D4);border:1px solid;border-color:#FFFFFF #716F64 #716F64 #FFFFFF;"></div><svg style="left:202px;top:447px" width="18" height="16" viewBox="0 0 18 16"><path d="M2 0V16" stroke="#3090E0" stroke-width="1.3"/><path d="M4 16V10L8 6V0" stroke="#E8A820" stroke-width="2.4" fill="none"/><path d="M11 0V16" stroke="#3090E0" stroke-width="1.3"/><path d="M17 8H12M14 6L12 8L14 10" stroke="#3090E0" stroke-width="1.2" fill="none"/></svg><div style="position:absolute;left:222px;top:450px;font:normal 11px/11px 'Liberation Sans', sans-serif;color:#000;white-space:nowrap;letter-spacing:-0.2px;">Edit</div>
<div style="position:absolute;left:9px;top:473px;width:258px;height:193px;background:#F8F8F8;border:1px solid #ACA899;"></div><div style="position:absolute;left:10px;top:474px;width:256px;height:17px;background:#ECE9D8;border-bottom:1px solid #C4C0AE;"></div><div style="position:absolute;left:13px;top:477px;font:normal 11px/11px 'Liberation Sans', sans-serif;color:#000;white-space:nowrap;letter-spacing:-0.25px;">2 Nets (0 Highlighted)</div>
<div style="position:absolute;left:10px;top:491px;width:256px;height:18px;background:#ECE9D8;border-top:1px solid #FFFFFF;border-bottom:1px solid #C4C0AE;"></div><div style="position:absolute;left:13px;top:495px;font:normal 11px/11px 'Liberation Sans', sans-serif;color:#000;white-space:nowrap;letter-spacing:-0.25px;">Name</div><svg style="left:249px;top:496px" width="9" height="8"><path d="M4.5 0.5L8.5 7.5H0.5Z" fill="none" stroke="#FFFFFF" stroke-width="1"/><path d="M4.5 0.5L0.5 7.5" stroke="#C8C4B4"/></svg>
<div style="position:absolute;left:12px;top:512px;font:normal 11px/11px 'Liberation Sans', sans-serif;color:#000;white-space:nowrap;letter-spacing:-0.25px;">CPCI_J5_N_A1 (-)</div>
<div style="position:absolute;left:10px;top:526px;width:256px;height:1px;background:#E8E8E8;"></div>
<div style="position:absolute;left:12px;top:529px;font:normal 11px/11px 'Liberation Sans', sans-serif;color:#000;white-space:nowrap;letter-spacing:-0.25px;">CPCI_J5_P_A1 (+)</div>
<div style="position:absolute;left:10px;top:543px;width:256px;height:1px;background:#E8E8E8;"></div>
<div style="position:absolute;left:10px;top:642px;width:128px;height:23px;background:linear-gradient(to bottom,#F5F4EC,#E6E3D4);border:1px solid;border-color:#FFFFFF #716F64 #716F64 #FFFFFF;"></div><svg style="left:22px;top:647px" width="16" height="14" viewBox="0 0 16 14"><path d="M3 11L13 3" stroke="#6080C0" stroke-dasharray="1.5 1.2"/><circle cx="2.5" cy="11.5" r="2" fill="#F07030"/><circle cx="6" cy="9" r="1.6" fill="#F07030"/><circle cx="13.5" cy="2.5" r="2" fill="#F07030"/><circle cx="10" cy="4.5" r="1.6" fill="#F07030"/></svg><div style="position:absolute;left:43px;top:648px;font:normal 11px/11px 'Liberation Sans', sans-serif;color:#000;white-space:nowrap;letter-spacing:-0.2px;">Create From Nets</div>
<div style="position:absolute;left:138px;top:642px;width:128px;height:23px;background:linear-gradient(to bottom,#F5F4EC,#E6E3D4);border:1px solid;border-color:#FFFFFF #716F64 #716F64 #FFFFFF;"></div><svg style="left:163px;top:646px" width="16" height="16" viewBox="0 0 16 16"><path d="M0 2H7L11 6H15M0 14H7L11 10H15" stroke="#E8A820" stroke-width="2.4" fill="none"/><path d="M0 3H7L11 7H15M0 15H7L11 11H15" stroke="#A07010" stroke-width="0.6" fill="none"/></svg><div style="position:absolute;left:183px;top:648px;font:normal 11px/11px 'Liberation Sans', sans-serif;color:#000;white-space:nowrap;letter-spacing:-0.2px;">Rule Wizard</div>
<div style="position:absolute;left:10px;top:672px;width:256px;height:144px;background:linear-gradient(to bottom,#303030 0px,#1E1E1E 50px,#101010 144px);"></div>
<svg style="left:0;top:0" width="1237" height="845" viewBox="0 0 1237 845"><defs><clipPath id="mmc"><rect x="10" y="672" width="256" height="144"/></clipPath></defs><g clip-path="url(#mmc)"><rect x="43.7" y="678" width="188.5" height="132" fill="#438420"/><rect x="49.4" y="707.8" width="87.7" height="2.0" fill="#ECECEC"/><rect x="48.9" y="708.6" width="2.0" height="93.7" fill="#ECECEC"/><rect x="219.7" y="711.2" width="1.9" height="91.1" fill="#ECECEC"/><rect x="46.8" y="800.6" width="178.0" height="3.4" fill="#ECECEC"/><rect x="46.8" y="806.2" width="178.0" height="2.9" fill="#ECECEC"/><rect x="65.6" y="737.6" width="1.7" height="52.8" fill="#ECECEC"/><rect x="65.6" y="737.6" width="40.9" height="1.7" fill="#ECECEC"/><rect x="104.7" y="709.8" width="1.7" height="41.4" fill="#ECECEC"/><rect x="67.3" y="749.5" width="39.2" height="1.7" fill="#ECECEC"/><rect x="68.1" y="750.4" width="30.7" height="39.2" fill="none" stroke="#ECECEC" stroke-width="1.2"/><rect x="67.3" y="788.7" width="32.4" height="1.7" fill="#ECECEC"/><rect x="97.9" y="752.1" width="1.7" height="49.4" fill="#ECECEC"/><rect x="116.7" y="709.8" width="1.7" height="91.7" fill="#ECECEC"/><rect x="135.4" y="709.8" width="1.7" height="44.0" fill="#ECECEC"/><rect x="72.4" y="718.0" width="27.3" height="8.5" fill="none" stroke="#ECECEC" stroke-width="1.6" rx="3"/><rect x="72.4" y="728.2" width="23.9" height="8.5" fill="none" stroke="#ECECEC" stroke-width="1.6" rx="3"/><rect x="106.4" y="712.0" width="28.1" height="18.7" fill="none" stroke="#ECECEC" stroke-width="1.8"/><rect x="108.1" y="713.7" width="3.1" height="3.1" fill="#B8B8B8"/><rect x="128.6" y="713.7" width="3.1" height="3.1" fill="#B8B8B8"/><rect x="108.1" y="720.6" width="3.1" height="3.1" fill="#B8B8B8"/><rect x="108.1" y="726.5" width="3.1" height="3.1" fill="#B8B8B8"/><rect x="128.6" y="726.5" width="3.1" height="3.1" fill="#B8B8B8"/><rect x="143.1" y="688.2" width="20.4" height="20.4" fill="none" stroke="#ECECEC" stroke-width="1.5"/><rect x="147.3" y="683.9" width="12.8" height="2.6" fill="none" stroke="#ECECEC" stroke-width="1.2"/><rect x="184.8" y="683.6" width="37.5" height="8.9" fill="none" stroke="#ECECEC" stroke-width="1.5"/><rect x="193.3" y="697.6" width="12.8" height="12.8" fill="none" stroke="#ECECEC" stroke-width="1.5"/><rect x="207.8" y="700.1" width="2.6" height="9.7" fill="none" stroke="#ECECEC" stroke-width="1"/><rect x="217.2" y="701.8" width="3.4" height="8.0" fill="none" stroke="#ECECEC" stroke-width="1"/><rect x="186.8" y="699.3" width="1.7" height="11.1" fill="#ECECEC"/><rect x="180.5" y="714.6" width="30.7" height="8.5" fill="none" stroke="#ECECEC" stroke-width="1.8" rx="4"/><rect x="180.5" y="724.8" width="30.7" height="8.5" fill="none" stroke="#ECECEC" stroke-width="1.8" rx="4"/><rect x="180.5" y="735.0" width="30.7" height="8.5" fill="none" stroke="#ECECEC" stroke-width="1.8" rx="4"/><rect x="180.5" y="745.3" width="30.7" height="8.5" fill="none" stroke="#ECECEC" stroke-width="1.8" rx="4"/><rect x="179.7" y="764.8" width="40.9" height="2.6" fill="#ECECEC"/><rect x="184.0" y="771.7" width="31.5" height="17.9" fill="none" stroke="#ECECEC" stroke-width="1.8" rx="4"/><rect x="120.1" y="791.3" width="25.6" height="10.2" fill="none" stroke="#ECECEC" stroke-width="1.5" rx="3"/><rect x="151.6" y="792.1" width="30.7" height="9.4" fill="none" stroke="#ECECEC" stroke-width="1.5" rx="3"/><rect x="148.2" y="724.8" width="18.7" height="21.3" fill="none" stroke="#ECECEC" stroke-width="1.5"/><rect x="166.9" y="710.3" width="1.2" height="36.6" fill="#ECECEC"/><rect x="104.7" y="756.3" width="11.9" height="12.8" fill="none" stroke="#ECECEC" stroke-width="1.2"/><rect x="108.1" y="760.6" width="3.4" height="4.3" fill="#F4C462"/><rect x="48.5" y="684.8" width="54.5" height="11.9" fill="none" stroke="#ECECEC" stroke-width="1.2"/><rect x="57.0" y="679.7" width="7.7" height="20.4" fill="#E8E4D4"/><rect x="75.8" y="679.7" width="7.7" height="20.4" fill="#E8E4D4"/><rect x="64.7" y="688.2" width="11.1" height="0.9" fill="#ECECEC"/><rect x="64.7" y="692.4" width="11.1" height="0.9" fill="#ECECEC"/><rect x="118.4" y="753.8" width="57.9" height="31.5" fill="#ECECEC"/><rect x="123.1" y="759.7" width="20.8" height="22.1" fill="#438420"/><rect x="151.6" y="755.8" width="21.3" height="26.1" fill="#438420"/><rect x="123.1" y="773.9" width="15.7" height="2.0" fill="#ECECEC"/><rect x="55.3" y="772.5" width="8.5" height="17.0" fill="#438420"/><rect x="53.6" y="772.5" width="11.9" height="17.9" fill="none" stroke="#ECECEC" stroke-width="1.5"/><rect x="105.6" y="686.3" width="10.6" height="6.8" fill="#F4C462"/><rect x="106.6" y="685.6" width="8.5" height="8.2" fill="#F4C462"/><rect x="107.6" y="690.1" width="0.7" height="1.4" fill="#ECECEC"/><rect x="113.4" y="690.1" width="0.7" height="1.4" fill="#ECECEC"/><rect x="107.6" y="690.9" width="6.5" height="0.5" fill="#ECECEC"/><rect x="117.5" y="686.3" width="10.6" height="6.8" fill="#F4C462"/><rect x="118.5" y="685.6" width="8.5" height="8.2" fill="#F4C462"/><rect x="119.6" y="690.1" width="0.7" height="1.4" fill="#ECECEC"/><rect x="125.3" y="690.1" width="0.7" height="1.4" fill="#ECECEC"/><rect x="119.6" y="690.9" width="6.5" height="0.5" fill="#ECECEC"/><rect x="105.6" y="696.5" width="10.6" height="6.8" fill="#F4C462"/><rect x="106.6" y="695.9" width="8.5" height="8.2" fill="#F4C462"/><rect x="107.6" y="700.3" width="0.7" height="1.4" fill="#ECECEC"/><rect x="113.4" y="700.3" width="0.7" height="1.4" fill="#ECECEC"/><rect x="107.6" y="701.1" width="6.5" height="0.5" fill="#ECECEC"/><rect x="117.5" y="696.5" width="10.6" height="6.8" fill="#F4C462"/><rect x="118.5" y="695.9" width="8.5" height="8.2" fill="#F4C462"/><rect x="119.6" y="700.3" width="0.7" height="1.4" fill="#ECECEC"/><rect x="125.3" y="700.3" width="0.7" height="1.4" fill="#ECECEC"/><rect x="119.6" y="701.1" width="6.5" height="0.5" fill="#ECECEC"/><rect x="118.4" y="731.6" width="10.2" height="11.9" fill="#F4C462"/><rect x="139.7" y="724.8" width="6.8" height="6.8" fill="#F4C462"/><rect x="85.1" y="752.1" width="3.4" height="8.5" fill="#F4C462"/><rect x="190.8" y="796.4" width="5.1" height="1.7" fill="#F4C462"/><rect x="192.5" y="758.9" width="5.1" height="1.7" fill="#F4C462"/><rect x="108.1" y="774.2" width="6.8" height="2.6" fill="#F4C462"/><rect x="46.0" y="685.6" width="1.7" height="27.3" fill="#F4C462"/><rect x="46.0" y="728.2" width="1.7" height="66.4" fill="#F4C462"/><rect x="221.9" y="685.6" width="1.7" height="27.3" fill="#F4C462"/><rect x="221.9" y="728.2" width="1.7" height="66.4" fill="#F4C462"/><rect x="86.0" y="700.1" width="3.4" height="3.4" fill="none" stroke="#ECECEC" stroke-width="1"/><rect x="92.0" y="700.1" width="3.4" height="3.4" fill="none" stroke="#ECECEC" stroke-width="1"/><rect x="100.5" y="699.3" width="2.6" height="4.3" fill="none" stroke="#ECECEC" stroke-width="1"/><rect x="55.8" y="723.8" width="3.0" height="1.0" fill="#ECECEC"/><rect x="51.9" y="755.7" width="1.1" height="1.7" fill="#ECECEC"/><rect x="57.2" y="784.3" width="1.4" height="1.3" fill="none" stroke="#ECECEC" stroke-width="0.9"/><rect x="64.8" y="761.9" width="2.2" height="2.7" fill="#F4C462"/><rect x="55.3" y="723.2" width="1.4" height="1.4" fill="none" stroke="#ECECEC" stroke-width="0.9"/><rect x="53.7" y="762.3" width="3.0" height="1.5" fill="#ECECEC"/><rect x="51.9" y="728.8" width="3.1" height="1.7" fill="#ECECEC"/><rect x="57.6" y="737.1" width="3.5" height="2.2" fill="#ECECEC"/><rect x="58.7" y="788.6" width="3.3" height="1.4" fill="none" stroke="#ECECEC" stroke-width="0.9"/><rect x="52.8" y="747.7" width="3.3" height="1.1" fill="#ECECEC"/><rect x="60.7" y="778.7" width="2.8" height="2.5" fill="#ECECEC"/><rect x="59.7" y="762.2" width="2.4" height="2.4" fill="none" stroke="#ECECEC" stroke-width="0.9"/><rect x="57.9" y="769.7" width="1.2" height="2.2" fill="none" stroke="#ECECEC" stroke-width="0.9"/><rect x="65.5" y="783.8" width="1.9" height="1.6" fill="none" stroke="#ECECEC" stroke-width="0.9"/><rect x="51.4" y="751.6" width="1.5" height="1.1" fill="#ECECEC"/><rect x="52.9" y="732.5" width="2.2" height="2.5" fill="#ECECEC"/><rect x="59.0" y="789.3" width="3.5" height="2.5" fill="#ECECEC"/><rect x="56.3" y="789.4" width="4.0" height="1.1" fill="#ECECEC"/><rect x="54.5" y="753.7" width="2.8" height="1.3" fill="#ECECEC"/><rect x="56.4" y="761.0" width="3.9" height="2.1" fill="#ECECEC"/><rect x="60.9" y="715.2" width="3.8" height="2.3" fill="none" stroke="#ECECEC" stroke-width="0.9"/><rect x="62.6" y="745.4" width="2.2" height="1.0" fill="none" stroke="#ECECEC" stroke-width="0.9"/><rect x="52.0" y="716.4" width="1.7" height="1.2" fill="#ECECEC"/><rect x="51.1" y="723.9" width="1.3" height="1.5" fill="#F4C462"/><rect x="60.0" y="723.6" width="1.8" height="1.5" fill="#ECECEC"/><rect x="63.4" y="799.2" width="2.5" height="1.8" fill="#ECECEC"/><rect x="56.0" y="734.0" width="3.6" height="1.2" fill="#F4C462"/><rect x="58.7" y="723.4" width="2.7" height="0.9" fill="#F4C462"/><rect x="63.6" y="772.6" width="1.8" height="1.5" fill="#ECECEC"/><rect x="58.8" y="780.0" width="2.0" height="1.3" fill="none" stroke="#ECECEC" stroke-width="0.9"/><rect x="65.3" y="786.6" width="3.5" height="2.4" fill="none" stroke="#ECECEC" stroke-width="0.9"/><rect x="54.4" y="756.6" width="2.1" height="0.9" fill="#ECECEC"/><rect x="54.8" y="772.3" width="4.0" height="1.7" fill="none" stroke="#ECECEC" stroke-width="0.9"/><rect x="65.4" y="795.7" width="2.1" height="1.3" fill="#ECECEC"/><rect x="54.0" y="766.1" width="3.8" height="2.4" fill="#ECECEC"/><rect x="62.7" y="717.9" width="3.0" height="2.6" fill="none" stroke="#ECECEC" stroke-width="0.9"/><rect x="61.9" y="753.1" width="1.6" height="2.3" fill="#ECECEC"/><rect x="65.1" y="745.7" width="2.3" height="2.6" fill="none" stroke="#ECECEC" stroke-width="0.9"/><rect x="53.5" y="721.7" width="1.5" height="2.5" fill="none" stroke="#ECECEC" stroke-width="0.9"/><rect x="53.2" y="784.3" width="4.0" height="2.1" fill="#ECECEC"/><rect x="53.0" y="711.6" width="4.0" height="2.1" fill="#F4C462"/><rect x="57.4" y="788.3" width="3.6" height="1.2" fill="#ECECEC"/><rect x="54.6" y="762.8" width="1.8" height="1.6" fill="#F4C462"/><rect x="56.2" y="751.3" width="2.8" height="2.5" fill="#F4C462"/><rect x="58.3" y="757.9" width="2.6" height="0.9" fill="#ECECEC"/><rect x="51.1" y="781.8" width="1.6" height="1.7" fill="none" stroke="#ECECEC" stroke-width="0.9"/><rect x="59.1" y="739.5" width="2.6" height="1.9" fill="none" stroke="#ECECEC" stroke-width="0.9"/><rect x="52.6" y="760.4" width="1.8" height="1.4" fill="none" stroke="#ECECEC" stroke-width="0.9"/><rect x="58.4" y="760.6" width="3.4" height="2.6" fill="#ECECEC"/><rect x="58.4" y="756.1" width="3.1" height="1.7" fill="#ECECEC"/><rect x="64.7" y="772.9" width="3.7" height="2.6" fill="#ECECEC"/><rect x="64.7" y="785.5" width="1.4" height="1.1" fill="#ECECEC"/><rect x="54.6" y="716.9" width="3.1" height="2.3" fill="none" stroke="#ECECEC" stroke-width="0.9"/><rect x="53.3" y="774.4" width="3.0" height="1.1" fill="none" stroke="#ECECEC" stroke-width="0.9"/><rect x="65.1" y="730.0" width="3.9" height="1.6" fill="#F4C462"/><rect x="63.1" y="724.8" width="2.3" height="1.8" fill="#ECECEC"/><rect x="55.7" y="774.9" width="1.1" height="1.9" fill="#ECECEC"/><rect x="55.9" y="766.1" width="2.6" height="1.0" fill="none" stroke="#ECECEC" stroke-width="0.9"/><rect x="62.5" y="797.2" width="1.3" height="1.3" fill="#ECECEC"/><rect x="55.0" y="721.9" width="2.3" height="2.6" fill="none" stroke="#ECECEC" stroke-width="0.9"/><rect x="54.8" y="723.7" width="3.8" height="1.9" fill="none" stroke="#ECECEC" stroke-width="0.9"/><rect x="52.4" y="715.5" width="3.1" height="1.6" fill="#F4C462"/><rect x="60.3" y="782.0" width="1.3" height="2.5" fill="#F4C462"/><rect x="57.6" y="740.7" width="2.7" height="2.6" fill="#ECECEC"/><rect x="58.7" y="731.7" width="1.4" height="1.2" fill="#ECECEC"/><rect x="55.6" y="737.6" width="3.4" height="1.4" fill="#ECECEC"/><rect x="56.1" y="712.0" width="1.8" height="0.9" fill="none" stroke="#ECECEC" stroke-width="0.9"/><rect x="59.1" y="727.3" width="2.5" height="2.6" fill="#ECECEC"/><rect x="57.3" y="754.6" width="3.6" height="1.6" fill="#ECECEC"/><rect x="65.3" y="741.0" width="3.6" height="2.2" fill="none" stroke="#ECECEC" stroke-width="0.9"/><rect x="56.9" y="741.4" width="1.2" height="1.1" fill="#ECECEC"/><rect x="54.8" y="724.9" width="1.3" height="2.4" fill="none" stroke="#ECECEC" stroke-width="0.9"/><rect x="60.8" y="735.5" width="1.8" height="1.4" fill="#ECECEC"/><rect x="57.5" y="733.9" width="4.0" height="2.7" fill="#ECECEC"/><rect x="65.1" y="738.0" width="2.1" height="0.9" fill="#ECECEC"/><rect x="58.4" y="728.3" width="2.6" height="0.9" fill="#ECECEC"/><rect x="56.9" y="714.1" width="1.1" height="1.4" fill="#ECECEC"/><rect x="58.7" y="777.5" width="3.0" height="2.2" fill="none" stroke="#ECECEC" stroke-width="0.9"/><rect x="56.7" y="739.5" width="4.0" height="1.1" fill="none" stroke="#ECECEC" stroke-width="0.9"/><rect x="60.4" y="714.2" width="3.6" height="2.5" fill="none" stroke="#ECECEC" stroke-width="0.9"/><rect x="61.7" y="783.0" width="1.4" height="1.8" fill="#ECECEC"/><rect x="62.7" y="784.2" width="2.8" height="2.5" fill="none" stroke="#ECECEC" stroke-width="0.9"/><rect x="61.1" y="730.9" width="1.1" height="1.1" fill="#ECECEC"/><rect x="63.2" y="760.3" width="2.9" height="2.0" fill="none" stroke="#ECECEC" stroke-width="0.9"/><rect x="58.2" y="710.6" width="3.5" height="2.3" fill="#ECECEC"/><rect x="60.6" y="716.2" width="3.3" height="1.3" fill="#ECECEC"/><rect x="61.6" y="728.7" width="3.3" height="2.7" fill="#ECECEC"/><rect x="58.0" y="771.5" width="3.4" height="2.0" fill="none" stroke="#ECECEC" stroke-width="0.9"/><rect x="52.2" y="723.5" width="1.8" height="2.2" fill="#ECECEC"/><rect x="51.3" y="715.8" width="1.8" height="2.1" fill="none" stroke="#ECECEC" stroke-width="0.9"/><rect x="60.9" y="736.3" width="2.6" height="1.7" fill="#ECECEC"/><rect x="64.0" y="728.2" width="4.0" height="2.6" fill="#ECECEC"/><rect x="62.9" y="796.9" width="2.4" height="1.4" fill="#F4C462"/><rect x="54.1" y="762.3" width="1.5" height="1.8" fill="none" stroke="#ECECEC" stroke-width="0.9"/><rect x="53.0" y="783.7" width="2.6" height="2.5" fill="none" stroke="#ECECEC" stroke-width="0.9"/><rect x="54.4" y="790.6" width="2.5" height="0.9" fill="#ECECEC"/><rect x="57.6" y="737.3" width="1.5" height="1.5" fill="#ECECEC"/><rect x="51.1" y="777.5" width="3.6" height="1.1" fill="none" stroke="#ECECEC" stroke-width="0.9"/><rect x="61.4" y="791.0" width="1.9" height="1.5" fill="#F4C462"/><rect x="59.6" y="742.6" width="2.3" height="1.4" fill="#ECECEC"/><rect x="63.2" y="735.9" width="3.9" height="1.3" fill="#ECECEC"/><rect x="53.8" y="743.7" width="4.0" height="2.5" fill="none" stroke="#ECECEC" stroke-width="0.9"/><rect x="60.2" y="792.0" width="3.9" height="1.9" fill="none" stroke="#ECECEC" stroke-width="0.9"/><rect x="51.8" y="775.8" width="2.4" height="2.3" fill="none" stroke="#ECECEC" stroke-width="0.9"/><rect x="55.2" y="714.7" width="3.9" height="1.1" fill="#ECECEC"/><rect x="55.4" y="776.4" width="4.0" height="1.3" fill="none" stroke="#ECECEC" stroke-width="0.9"/><rect x="55.4" y="760.2" width="2.2" height="1.2" fill="#ECECEC"/><rect x="64.2" y="754.8" width="1.7" height="2.6" fill="none" stroke="#ECECEC" stroke-width="0.9"/><rect x="57.6" y="722.8" width="1.6" height="1.0" fill="#ECECEC"/><rect x="54.5" y="733.4" width="2.8" height="2.5" fill="none" stroke="#ECECEC" stroke-width="0.9"/><rect x="83.2" y="743.5" width="2.6" height="1.6" fill="#ECECEC"/><rect x="78.3" y="749.2" width="1.4" height="1.8" fill="none" stroke="#ECECEC" stroke-width="0.9"/><rect x="99.7" y="741.5" width="1.9" height="1.3" fill="#ECECEC"/><rect x="103.0" y="748.0" width="3.7" height="0.9" fill="#ECECEC"/><rect x="100.9" y="744.1" width="2.8" height="0.9" fill="#F4C462"/><rect x="98.3" y="748.0" width="4.0" height="1.3" fill="#ECECEC"/><rect x="87.2" y="746.3" width="3.9" height="2.2" fill="none" stroke="#ECECEC" stroke-width="0.9"/><rect x="96.1" y="744.0" width="2.7" height="0.9" fill="none" stroke="#ECECEC" stroke-width="0.9"/><rect x="76.6" y="748.7" width="3.0" height="1.4" fill="#ECECEC"/><rect x="91.4" y="746.4" width="1.4" height="1.0" fill="#ECECEC"/><rect x="82.3" y="741.6" width="2.9" height="0.9" fill="#ECECEC"/><rect x="103.2" y="745.9" width="3.7" height="1.7" fill="#ECECEC"/><rect x="103.3" y="746.5" width="2.0" height="0.9" fill="#ECECEC"/><rect x="83.5" y="741.9" width="3.1" height="2.6" fill="#ECECEC"/><rect x="80.5" y="743.6" width="3.1" height="1.2" fill="none" stroke="#ECECEC" stroke-width="0.9"/><rect x="95.2" y="744.5" width="1.7" height="2.7" fill="#ECECEC"/><rect x="76.6" y="741.6" width="3.4" height="1.4" fill="none" stroke="#ECECEC" stroke-width="0.9"/><rect x="86.3" y="741.2" width="1.7" height="1.6" fill="none" stroke="#ECECEC" stroke-width="0.9"/><rect x="102.9" y="740.8" width="2.2" height="1.3" fill="none" stroke="#ECECEC" stroke-width="0.9"/><rect x="73.3" y="739.8" width="1.2" height="1.6" fill="none" stroke="#ECECEC" stroke-width="0.9"/><rect x="100.5" y="746.8" width="4.1" height="2.6" fill="#ECECEC"/><rect x="102.4" y="746.9" width="1.1" height="2.1" fill="#ECECEC"/><rect x="80.3" y="741.0" width="1.0" height="1.4" fill="#F4C462"/><rect x="72.6" y="749.1" width="1.7" height="1.5" fill="none" stroke="#ECECEC" stroke-width="0.9"/><rect x="98.2" y="743.7" width="1.2" height="1.7" fill="#F4C462"/><rect x="75.2" y="743.0" width="3.8" height="0.9" fill="#ECECEC"/><rect x="96.2" y="739.7" width="1.1" height="1.0" fill="none" stroke="#ECECEC" stroke-width="0.9"/><rect x="77.5" y="746.9" width="3.8" height="1.5" fill="#F4C462"/><rect x="90.7" y="742.0" width="3.2" height="1.4" fill="#ECECEC"/><rect x="95.8" y="748.7" width="3.0" height="2.6" fill="#ECECEC"/><rect x="85.5" y="749.1" width="3.9" height="1.6" fill="#ECECEC"/><rect x="86.2" y="748.8" width="1.6" height="2.4" fill="none" stroke="#ECECEC" stroke-width="0.9"/><rect x="98.2" y="747.2" width="2.9" height="1.5" fill="#ECECEC"/><rect x="96.8" y="740.1" width="1.6" height="2.3" fill="#ECECEC"/><rect x="69.3" y="744.9" width="2.0" height="2.7" fill="none" stroke="#ECECEC" stroke-width="0.9"/><rect x="104.3" y="742.0" width="1.3" height="1.0" fill="#ECECEC"/><rect x="84.5" y="741.7" width="2.3" height="2.0" fill="none" stroke="#ECECEC" stroke-width="0.9"/><rect x="95.5" y="747.9" width="3.1" height="1.1" fill="none" stroke="#ECECEC" stroke-width="0.9"/><rect x="78.9" y="745.1" width="2.2" height="2.2" fill="#ECECEC"/><rect x="77.1" y="740.9" width="3.7" height="1.9" fill="#ECECEC"/><rect x="97.7" y="771.1" width="1.7" height="2.4" fill="none" stroke="#ECECEC" stroke-width="0.9"/><rect x="97.7" y="755.9" width="2.5" height="2.4" fill="none" stroke="#ECECEC" stroke-width="0.9"/><rect x="95.4" y="753.6" width="1.9" height="1.1" fill="#F4C462"/><rect x="85.9" y="786.9" width="2.2" height="2.5" fill="#ECECEC"/><rect x="91.5" y="787.5" width="1.3" height="2.0" fill="none" stroke="#ECECEC" stroke-width="0.9"/><rect x="75.3" y="765.9" width="1.5" height="1.2" fill="#ECECEC"/><rect x="87.8" y="759.7" width="1.1" height="1.5" fill="none" stroke="#ECECEC" stroke-width="0.9"/><rect x="74.3" y="763.8" width="1.6" height="2.3" fill="#ECECEC"/><rect x="71.9" y="766.9" width="2.7" height="2.0" fill="#ECECEC"/><rect x="89.1" y="767.4" width="1.9" height="1.4" fill="none" stroke="#ECECEC" stroke-width="0.9"/><rect x="78.0" y="773.3" width="2.1" height="1.6" fill="none" stroke="#ECECEC" stroke-width="0.9"/><rect x="97.8" y="765.7" width="1.6" height="2.2" fill="#ECECEC"/><rect x="95.1" y="767.9" width="3.5" height="1.6" fill="none" stroke="#ECECEC" stroke-width="0.9"/><rect x="82.3" y="758.2" width="1.1" height="1.9" fill="none" stroke="#ECECEC" stroke-width="0.9"/><rect x="95.3" y="755.4" width="2.9" height="1.5" fill="#ECECEC"/><rect x="77.2" y="771.6" width="3.9" height="1.1" fill="#ECECEC"/><rect x="97.0" y="759.5" width="1.4" height="2.6" fill="none" stroke="#ECECEC" stroke-width="0.9"/><rect x="82.9" y="754.1" width="3.9" height="1.6" fill="none" stroke="#ECECEC" stroke-width="0.9"/><rect x="86.9" y="783.0" width="1.5" height="2.3" fill="#ECECEC"/><rect x="93.5" y="783.1" width="1.6" height="1.3" fill="#ECECEC"/><rect x="80.1" y="756.7" width="1.8" height="2.2" fill="none" stroke="#ECECEC" stroke-width="0.9"/><rect x="70.2" y="773.1" width="3.3" height="0.9" fill="none" stroke="#ECECEC" stroke-width="0.9"/><rect x="72.4" y="774.5" width="2.7" height="2.0" fill="#ECECEC"/><rect x="85.8" y="768.0" width="3.0" height="1.7" fill="#ECECEC"/><rect x="86.9" y="770.4" width="1.7" height="2.3" fill="none" stroke="#ECECEC" stroke-width="0.9"/><rect x="82.2" y="758.8" width="2.5" height="1.1" fill="#ECECEC"/><rect x="71.6" y="768.6" width="2.6" height="0.9" fill="none" stroke="#ECECEC" stroke-width="0.9"/><rect x="71.3" y="779.6" width="3.4" height="1.8" fill="#ECECEC"/><rect x="79.9" y="787.7" width="1.4" height="2.5" fill="none" stroke="#ECECEC" stroke-width="0.9"/><rect x="90.2" y="782.6" width="1.6" height="2.7" fill="#F4C462"/><rect x="95.5" y="758.3" width="3.4" height="2.6" fill="#ECECEC"/><rect x="90.9" y="758.0" width="3.8" height="1.4" fill="none" stroke="#ECECEC" stroke-width="0.9"/><rect x="73.1" y="770.9" width="3.8" height="1.2" fill="#ECECEC"/><rect x="78.2" y="753.4" width="1.6" height="1.2" fill="none" stroke="#ECECEC" stroke-width="0.9"/><rect x="88.6" y="785.6" width="1.5" height="2.3" fill="#ECECEC"/><rect x="87.4" y="765.6" width="3.7" height="1.9" fill="none" stroke="#ECECEC" stroke-width="0.9"/><rect x="94.5" y="756.0" width="4.1" height="2.0" fill="#ECECEC"/><rect x="76.6" y="789.2" width="2.8" height="1.5" fill="none" stroke="#ECECEC" stroke-width="0.9"/><rect x="81.8" y="758.7" width="3.3" height="0.9" fill="none" stroke="#ECECEC" stroke-width="0.9"/><rect x="76.3" y="776.0" width="4.0" height="1.9" fill="none" stroke="#ECECEC" stroke-width="0.9"/><rect x="78.0" y="752.1" width="1.1" height="1.1" fill="none" stroke="#ECECEC" stroke-width="0.9"/><rect x="81.5" y="771.3" width="3.8" height="1.1" fill="#ECECEC"/><rect x="69.6" y="752.2" width="2.1" height="1.1" fill="#ECECEC"/><rect x="85.9" y="774.1" width="1.6" height="2.0" fill="#ECECEC"/><rect x="96.1" y="761.2" width="1.5" height="1.0" fill="none" stroke="#ECECEC" stroke-width="0.9"/><rect x="114.5" y="785.3" width="2.3" height="1.3" fill="#ECECEC"/><rect x="109.2" y="756.6" width="3.0" height="1.7" fill="none" stroke="#ECECEC" stroke-width="0.9"/><rect x="112.1" y="749.8" width="3.8" height="0.9" fill="#ECECEC"/><rect x="103.7" y="737.2" width="3.4" height="0.9" fill="none" stroke="#ECECEC" stroke-width="0.9"/><rect x="115.7" y="742.8" width="1.6" height="2.0" fill="#ECECEC"/><rect x="113.5" y="744.9" width="2.0" height="1.4" fill="#F4C462"/><rect x="113.0" y="780.9" width="1.0" height="2.4" fill="none" stroke="#ECECEC" stroke-width="0.9"/><rect x="107.6" y="782.6" width="2.4" height="1.3" fill="#ECECEC"/><rect x="100.3" y="755.6" width="3.3" height="2.2" fill="none" stroke="#ECECEC" stroke-width="0.9"/><rect x="111.7" y="751.0" width="2.7" height="1.7" fill="none" stroke="#ECECEC" stroke-width="0.9"/><rect x="108.5" y="751.0" width="3.0" height="2.7" fill="#F4C462"/><rect x="99.9" y="750.6" width="1.7" height="2.2" fill="none" stroke="#ECECEC" stroke-width="0.9"/><rect x="112.3" y="755.0" width="3.7" height="1.5" fill="#F4C462"/><rect x="110.4" y="779.4" width="3.1" height="2.7" fill="#ECECEC"/><rect x="111.5" y="790.3" width="2.4" height="2.2" fill="none" stroke="#ECECEC" stroke-width="0.9"/><rect x="104.9" y="747.4" width="2.9" height="1.0" fill="none" stroke="#ECECEC" stroke-width="0.9"/><rect x="102.1" y="735.1" width="1.3" height="2.6" fill="#ECECEC"/><rect x="100.1" y="736.1" width="3.1" height="2.0" fill="none" stroke="#ECECEC" stroke-width="0.9"/><rect x="112.2" y="737.7" width="2.8" height="1.5" fill="none" stroke="#ECECEC" stroke-width="0.9"/><rect x="113.6" y="792.5" width="1.2" height="2.5" fill="none" stroke="#ECECEC" stroke-width="0.9"/><rect x="115.7" y="740.4" width="1.7" height="1.1" fill="#ECECEC"/><rect x="113.5" y="775.5" width="3.6" height="2.0" fill="#ECECEC"/><rect x="101.3" y="783.6" width="1.7" height="1.4" fill="#ECECEC"/><rect x="104.0" y="752.1" width="3.2" height="1.5" fill="#F4C462"/><rect x="108.2" y="789.9" width="2.9" height="0.9" fill="#ECECEC"/><rect x="112.8" y="756.4" width="3.2" height="1.9" fill="#F4C462"/><rect x="101.2" y="787.8" width="1.5" height="0.9" fill="#ECECEC"/><rect x="116.3" y="733.6" width="2.5" height="1.8" fill="none" stroke="#ECECEC" stroke-width="0.9"/><rect x="102.8" y="766.2" width="2.1" height="2.4" fill="#F4C462"/><rect x="104.5" y="747.6" width="3.2" height="1.8" fill="#ECECEC"/><rect x="101.0" y="785.7" width="3.2" height="2.3" fill="none" stroke="#ECECEC" stroke-width="0.9"/><rect x="105.7" y="760.0" width="2.2" height="2.5" fill="#F4C462"/><rect x="100.1" y="747.0" width="1.8" height="2.5" fill="#ECECEC"/><rect x="114.7" y="748.8" width="2.4" height="1.8" fill="none" stroke="#ECECEC" stroke-width="0.9"/><rect x="112.5" y="776.3" width="2.1" height="1.5" fill="#ECECEC"/><rect x="110.9" y="782.6" width="1.5" height="1.7" fill="none" stroke="#ECECEC" stroke-width="0.9"/><rect x="109.5" y="741.7" width="2.4" height="2.5" fill="#ECECEC"/><rect x="104.8" y="780.0" width="3.6" height="1.1" fill="#ECECEC"/><rect x="105.2" y="768.0" width="1.5" height="1.5" fill="#F4C462"/><rect x="112.0" y="740.1" width="4.0" height="1.0" fill="#F4C462"/><rect x="113.2" y="782.0" width="2.4" height="1.2" fill="none" stroke="#ECECEC" stroke-width="0.9"/><rect x="101.4" y="747.0" width="2.2" height="0.9" fill="#ECECEC"/><rect x="111.4" y="766.6" width="3.0" height="1.7" fill="#ECECEC"/><rect x="106.5" y="782.6" width="3.8" height="1.7" fill="none" stroke="#ECECEC" stroke-width="0.9"/><rect x="112.4" y="761.3" width="1.7" height="2.2" fill="none" stroke="#ECECEC" stroke-width="0.9"/><rect x="112.8" y="779.8" width="3.6" height="2.1" fill="none" stroke="#ECECEC" stroke-width="0.9"/><rect x="107.4" y="754.1" width="2.9" height="1.0" fill="#ECECEC"/><rect x="111.8" y="775.2" width="1.8" height="1.6" fill="#ECECEC"/><rect x="106.6" y="778.2" width="3.9" height="1.2" fill="none" stroke="#ECECEC" stroke-width="0.9"/><rect x="112.9" y="759.2" width="2.5" height="2.7" fill="#ECECEC"/><rect x="102.4" y="785.3" width="3.9" height="1.8" fill="#ECECEC"/><rect x="108.8" y="781.0" width="2.6" height="2.0" fill="none" stroke="#ECECEC" stroke-width="0.9"/><rect x="108.5" y="760.6" width="3.9" height="1.2" fill="none" stroke="#ECECEC" stroke-width="0.9"/><rect x="106.3" y="784.0" width="1.4" height="2.7" fill="#ECECEC"/><rect x="104.3" y="759.9" width="1.1" height="1.6" fill="#ECECEC"/><rect x="111.7" y="737.0" width="1.7" height="2.2" fill="none" stroke="#ECECEC" stroke-width="0.9"/><rect x="113.5" y="736.1" width="3.5" height="1.6" fill="#ECECEC"/><rect x="116.1" y="748.2" width="3.0" height="1.7" fill="none" stroke="#ECECEC" stroke-width="0.9"/><rect x="110.5" y="751.3" width="2.1" height="2.0" fill="none" stroke="#ECECEC" stroke-width="0.9"/><rect x="116.5" y="741.2" width="1.9" height="1.9" fill="#ECECEC"/><rect x="111.8" y="749.0" width="1.8" height="1.6" fill="#ECECEC"/><rect x="110.0" y="731.7" width="3.2" height="1.4" fill="#ECECEC"/><rect x="113.0" y="740.4" width="3.0" height="2.1" fill="#F4C462"/><rect x="116.9" y="732.8" width="3.6" height="2.5" fill="none" stroke="#ECECEC" stroke-width="0.9"/><rect x="109.6" y="748.6" width="3.0" height="0.9" fill="#F4C462"/><rect x="114.8" y="736.7" width="1.3" height="1.1" fill="#ECECEC"/><rect x="111.7" y="734.7" width="3.8" height="2.3" fill="#F4C462"/><rect x="114.4" y="747.6" width="3.1" height="2.5" fill="none" stroke="#ECECEC" stroke-width="0.9"/><rect x="116.7" y="735.7" width="3.1" height="1.8" fill="none" stroke="#ECECEC" stroke-width="0.9"/><rect x="139.5" y="748.5" width="2.7" height="1.3" fill="#ECECEC"/><rect x="140.4" y="723.2" width="2.5" height="1.1" fill="#ECECEC"/><rect x="141.2" y="747.9" width="1.0" height="2.4" fill="#ECECEC"/><rect x="143.3" y="747.2" width="2.2" height="1.6" fill="none" stroke="#ECECEC" stroke-width="0.9"/><rect x="133.3" y="740.9" width="3.0" height="0.9" fill="none" stroke="#ECECEC" stroke-width="0.9"/><rect x="143.6" y="750.0" width="2.0" height="2.7" fill="#ECECEC"/><rect x="147.3" y="722.4" width="3.2" height="2.0" fill="#F4C462"/><rect x="138.2" y="736.0" width="2.6" height="2.3" fill="#ECECEC"/><rect x="139.2" y="738.4" width="3.6" height="1.4" fill="none" stroke="#ECECEC" stroke-width="0.9"/><rect x="138.9" y="736.9" width="1.9" height="1.8" fill="none" stroke="#ECECEC" stroke-width="0.9"/><rect x="143.1" y="745.7" width="2.0" height="1.4" fill="#ECECEC"/><rect x="142.8" y="745.5" width="1.1" height="2.2" fill="none" stroke="#ECECEC" stroke-width="0.9"/><rect x="141.3" y="722.9" width="1.9" height="0.9" fill="#F4C462"/><rect x="142.4" y="741.6" width="3.4" height="2.6" fill="none" stroke="#ECECEC" stroke-width="0.9"/><rect x="142.5" y="740.6" width="3.2" height="2.0" fill="none" stroke="#ECECEC" stroke-width="0.9"/><rect x="135.6" y="741.9" width="2.4" height="2.3" fill="#ECECEC"/><rect x="132.6" y="745.2" width="3.8" height="2.1" fill="#ECECEC"/><rect x="145.4" y="738.6" width="1.8" height="1.4" fill="#ECECEC"/><rect x="139.3" y="741.1" width="3.9" height="1.0" fill="none" stroke="#ECECEC" stroke-width="0.9"/><rect x="132.7" y="725.0" width="3.5" height="1.9" fill="none" stroke="#ECECEC" stroke-width="0.9"/><rect x="139.6" y="721.8" width="2.2" height="2.0" fill="none" stroke="#ECECEC" stroke-width="0.9"/><rect x="148.7" y="736.0" width="2.3" height="1.0" fill="none" stroke="#ECECEC" stroke-width="0.9"/><rect x="135.6" y="726.1" width="1.1" height="0.9" fill="none" stroke="#ECECEC" stroke-width="0.9"/><rect x="134.1" y="751.0" width="1.3" height="2.5" fill="#ECECEC"/><rect x="144.2" y="728.8" width="3.3" height="1.2" fill="#ECECEC"/><rect x="144.1" y="747.6" width="3.3" height="1.0" fill="none" stroke="#ECECEC" stroke-width="0.9"/><rect x="144.1" y="735.5" width="3.9" height="1.3" fill="none" stroke="#ECECEC" stroke-width="0.9"/><rect x="144.2" y="721.8" width="1.1" height="2.1" fill="none" stroke="#ECECEC" stroke-width="0.9"/><rect x="133.4" y="730.9" width="3.3" height="1.2" fill="none" stroke="#ECECEC" stroke-width="0.9"/><rect x="140.3" y="723.2" width="2.1" height="1.9" fill="#ECECEC"/><rect x="134.5" y="745.9" width="2.1" height="2.1" fill="none" stroke="#ECECEC" stroke-width="0.9"/><rect x="139.1" y="733.2" width="3.4" height="2.6" fill="none" stroke="#ECECEC" stroke-width="0.9"/><rect x="141.6" y="730.4" width="1.2" height="2.7" fill="none" stroke="#ECECEC" stroke-width="0.9"/><rect x="146.1" y="731.6" width="2.9" height="2.7" fill="none" stroke="#ECECEC" stroke-width="0.9"/><rect x="142.2" y="730.9" width="2.3" height="2.5" fill="#ECECEC"/><rect x="142.2" y="748.9" width="3.5" height="1.4" fill="#ECECEC"/><rect x="139.2" y="739.4" width="3.5" height="2.5" fill="#ECECEC"/><rect x="145.8" y="748.0" width="2.8" height="1.4" fill="none" stroke="#ECECEC" stroke-width="0.9"/><rect x="145.7" y="742.4" width="3.8" height="1.5" fill="#ECECEC"/><rect x="145.6" y="727.5" width="3.3" height="2.6" fill="#ECECEC"/><rect x="177.0" y="732.0" width="1.7" height="1.3" fill="none" stroke="#ECECEC" stroke-width="0.9"/><rect x="178.2" y="731.8" width="1.3" height="2.4" fill="none" stroke="#ECECEC" stroke-width="0.9"/><rect x="172.1" y="736.3" width="3.8" height="2.5" fill="#ECECEC"/><rect x="176.0" y="721.7" width="1.6" height="1.2" fill="none" stroke="#ECECEC" stroke-width="0.9"/><rect x="173.5" y="735.7" width="2.3" height="1.8" fill="#ECECEC"/><rect x="180.5" y="728.6" width="1.3" height="2.0" fill="none" stroke="#ECECEC" stroke-width="0.9"/><rect x="171.2" y="737.0" width="2.1" height="1.8" fill="#ECECEC"/><rect x="180.4" y="747.0" width="2.5" height="1.9" fill="#ECECEC"/><rect x="174.2" y="750.1" width="3.4" height="2.4" fill="none" stroke="#ECECEC" stroke-width="0.9"/><rect x="172.3" y="716.0" width="1.6" height="1.2" fill="#ECECEC"/><rect x="175.6" y="747.2" width="2.4" height="2.6" fill="none" stroke="#ECECEC" stroke-width="0.9"/><rect x="170.2" y="737.0" width="2.2" height="1.1" fill="none" stroke="#ECECEC" stroke-width="0.9"/><rect x="172.3" y="735.7" width="3.0" height="2.6" fill="none" stroke="#ECECEC" stroke-width="0.9"/><rect x="173.8" y="731.4" width="1.5" height="2.7" fill="none" stroke="#ECECEC" stroke-width="0.9"/><rect x="171.9" y="716.0" width="1.8" height="1.5" fill="none" stroke="#ECECEC" stroke-width="0.9"/><rect x="179.5" y="746.0" width="1.2" height="2.3" fill="none" stroke="#ECECEC" stroke-width="0.9"/><rect x="176.6" y="751.5" width="1.2" height="1.1" fill="none" stroke="#ECECEC" stroke-width="0.9"/><rect x="179.9" y="740.0" width="1.9" height="2.0" fill="none" stroke="#ECECEC" stroke-width="0.9"/><rect x="170.6" y="726.7" width="1.8" height="1.1" fill="#ECECEC"/><rect x="172.1" y="720.0" width="3.1" height="0.9" fill="none" stroke="#ECECEC" stroke-width="0.9"/><rect x="171.6" y="715.9" width="3.9" height="1.3" fill="none" stroke="#ECECEC" stroke-width="0.9"/><rect x="179.1" y="747.9" width="1.5" height="1.7" fill="#F4C462"/><rect x="208.1" y="761.7" width="2.4" height="1.5" fill="none" stroke="#ECECEC" stroke-width="0.9"/><rect x="195.1" y="761.7" width="1.5" height="1.3" fill="#ECECEC"/><rect x="197.8" y="757.6" width="3.7" height="1.4" fill="#ECECEC"/><rect x="187.7" y="763.5" width="2.0" height="1.2" fill="#ECECEC"/><rect x="210.3" y="757.3" width="4.0" height="1.0" fill="none" stroke="#ECECEC" stroke-width="0.9"/><rect x="201.9" y="758.1" width="2.5" height="1.4" fill="#ECECEC"/><rect x="191.0" y="764.8" width="4.1" height="2.6" fill="#ECECEC"/><rect x="210.1" y="756.8" width="3.2" height="1.4" fill="none" stroke="#ECECEC" stroke-width="0.9"/><rect x="178.6" y="763.2" width="2.1" height="1.1" fill="#ECECEC"/><rect x="196.8" y="757.9" width="2.4" height="2.6" fill="#ECECEC"/><rect x="182.9" y="757.9" width="3.4" height="2.2" fill="#ECECEC"/><rect x="181.1" y="761.5" width="2.5" height="1.4" fill="#ECECEC"/><rect x="203.3" y="763.2" width="2.8" height="1.2" fill="#ECECEC"/><rect x="192.6" y="762.5" width="1.2" height="2.4" fill="#ECECEC"/><rect x="208.9" y="760.5" width="1.1" height="2.6" fill="#F4C462"/><rect x="187.5" y="757.9" width="3.6" height="1.5" fill="#ECECEC"/><rect x="199.3" y="756.4" width="2.6" height="1.7" fill="#ECECEC"/><rect x="203.6" y="763.3" width="3.7" height="1.5" fill="none" stroke="#ECECEC" stroke-width="0.9"/><rect x="191.6" y="762.7" width="1.2" height="2.5" fill="none" stroke="#ECECEC" stroke-width="0.9"/><rect x="195.7" y="760.7" width="2.6" height="1.9" fill="#F4C462"/><rect x="186.0" y="757.9" width="1.3" height="1.3" fill="none" stroke="#ECECEC" stroke-width="0.9"/><rect x="179.1" y="757.1" width="3.2" height="1.2" fill="#ECECEC"/><rect x="198.6" y="760.8" width="3.2" height="1.0" fill="none" stroke="#ECECEC" stroke-width="0.9"/><rect x="203.6" y="756.7" width="1.4" height="1.8" fill="#ECECEC"/><rect x="182.4" y="759.8" width="1.4" height="2.0" fill="none" stroke="#ECECEC" stroke-width="0.9"/><rect x="183.3" y="761.2" width="3.3" height="1.2" fill="none" stroke="#ECECEC" stroke-width="0.9"/><rect x="94.9" y="794.6" width="2.3" height="2.4" fill="#ECECEC"/><rect x="95.1" y="797.9" width="2.1" height="1.3" fill="#ECECEC"/><rect x="97.0" y="798.1" width="3.8" height="2.4" fill="none" stroke="#ECECEC" stroke-width="0.9"/><rect x="52.8" y="795.7" width="4.0" height="2.6" fill="#ECECEC"/><rect x="80.4" y="794.4" width="2.6" height="1.0" fill="#ECECEC"/><rect x="51.2" y="792.4" width="4.0" height="2.3" fill="none" stroke="#ECECEC" stroke-width="0.9"/><rect x="80.4" y="798.1" width="3.7" height="2.5" fill="#ECECEC"/><rect x="62.9" y="797.0" width="1.9" height="1.9" fill="none" stroke="#ECECEC" stroke-width="0.9"/><rect x="79.9" y="793.4" width="2.6" height="1.7" fill="none" stroke="#ECECEC" stroke-width="0.9"/><rect x="63.9" y="793.9" width="3.0" height="1.1" fill="none" stroke="#ECECEC" stroke-width="0.9"/><rect x="95.8" y="795.6" width="1.8" height="1.7" fill="#ECECEC"/><rect x="56.1" y="792.4" width="1.9" height="1.6" fill="#ECECEC"/><rect x="54.4" y="795.9" width="3.6" height="2.0" fill="none" stroke="#ECECEC" stroke-width="0.9"/><rect x="81.2" y="793.0" width="3.2" height="1.7" fill="#ECECEC"/><rect x="72.6" y="793.9" width="1.8" height="1.3" fill="#ECECEC"/><rect x="78.2" y="791.4" width="2.1" height="2.5" fill="#ECECEC"/><rect x="73.7" y="793.7" width="4.1" height="1.4" fill="none" stroke="#ECECEC" stroke-width="0.9"/><rect x="57.8" y="791.8" width="3.7" height="1.7" fill="#ECECEC"/><rect x="71.2" y="797.5" width="1.4" height="1.3" fill="none" stroke="#ECECEC" stroke-width="0.9"/><rect x="85.5" y="792.6" width="2.1" height="1.5" fill="none" stroke="#ECECEC" stroke-width="0.9"/><rect x="79.6" y="798.5" width="3.5" height="1.8" fill="none" stroke="#ECECEC" stroke-width="0.9"/><rect x="85.7" y="797.7" width="2.5" height="2.3" fill="none" stroke="#ECECEC" stroke-width="0.9"/><rect x="93.9" y="792.3" width="3.7" height="0.9" fill="none" stroke="#ECECEC" stroke-width="0.9"/><rect x="78.2" y="795.5" width="4.0" height="1.9" fill="#ECECEC"/><rect x="91.9" y="796.4" width="2.2" height="1.7" fill="#ECECEC"/><rect x="64.2" y="794.6" width="2.7" height="1.6" fill="#ECECEC"/><rect x="90.7" y="795.5" width="2.4" height="1.2" fill="#ECECEC"/><rect x="77.7" y="796.2" width="1.3" height="2.6" fill="#ECECEC"/><rect x="90.2" y="799.4" width="1.6" height="1.7" fill="none" stroke="#ECECEC" stroke-width="0.9"/><rect x="50.7" y="791.7" width="2.8" height="1.8" fill="none" stroke="#ECECEC" stroke-width="0.9"/><rect x="87.1" y="795.8" width="4.1" height="1.8" fill="#ECECEC"/><rect x="68.8" y="794.3" width="2.8" height="1.5" fill="none" stroke="#ECECEC" stroke-width="0.9"/><rect x="82.5" y="795.7" width="1.3" height="1.6" fill="#ECECEC"/><rect x="77.6" y="798.7" width="4.0" height="1.8" fill="#ECECEC"/><rect x="97.7" y="794.2" width="2.6" height="2.4" fill="#ECECEC"/><rect x="96.9" y="798.3" width="2.6" height="1.1" fill="none" stroke="#ECECEC" stroke-width="0.9"/><rect x="83.1" y="798.2" width="4.1" height="2.5" fill="#ECECEC"/><rect x="64.1" y="795.6" width="2.6" height="1.2" fill="#ECECEC"/><rect x="79.0" y="794.3" width="4.1" height="2.0" fill="#ECECEC"/><rect x="87.8" y="793.9" width="3.1" height="0.9" fill="#ECECEC"/><rect x="159.0" y="739.0" width="1.6" height="1.8" fill="none" stroke="#ECECEC" stroke-width="0.9"/><rect x="153.6" y="738.6" width="2.7" height="2.7" fill="none" stroke="#ECECEC" stroke-width="0.9"/><rect x="156.0" y="728.8" width="1.5" height="2.3" fill="#ECECEC"/><rect x="151.9" y="736.3" width="3.5" height="2.0" fill="none" stroke="#ECECEC" stroke-width="0.9"/><rect x="150.1" y="726.7" width="3.4" height="1.5" fill="none" stroke="#ECECEC" stroke-width="0.9"/><rect x="155.1" y="729.7" width="1.8" height="1.0" fill="none" stroke="#ECECEC" stroke-width="0.9"/><rect x="158.9" y="733.1" width="2.4" height="1.6" fill="#F4C462"/><rect x="159.0" y="744.5" width="2.4" height="2.0" fill="#ECECEC"/><rect x="164.9" y="742.5" width="2.0" height="2.5" fill="none" stroke="#ECECEC" stroke-width="0.9"/><rect x="154.2" y="737.8" width="4.0" height="1.8" fill="none" stroke="#ECECEC" stroke-width="0.9"/><rect x="153.2" y="733.8" width="3.2" height="1.3" fill="#F4C462"/><rect x="157.3" y="741.4" width="1.8" height="1.2" fill="#ECECEC"/><rect x="165.6" y="732.0" width="2.7" height="1.1" fill="#ECECEC"/><rect x="155.9" y="727.7" width="1.4" height="2.4" fill="#ECECEC"/><rect x="152.3" y="731.8" width="1.7" height="0.9" fill="none" stroke="#ECECEC" stroke-width="0.9"/><rect x="154.8" y="729.4" width="3.2" height="1.0" fill="#ECECEC"/><rect x="151.2" y="734.8" width="3.6" height="2.4" fill="#ECECEC"/><rect x="161.3" y="733.6" width="4.0" height="1.2" fill="none" stroke="#ECECEC" stroke-width="0.9"/><rect x="157.6" y="730.8" width="2.4" height="1.1" fill="none" stroke="#ECECEC" stroke-width="0.9"/><rect x="153.5" y="743.4" width="2.8" height="1.5" fill="#ECECEC"/><rect x="152.6" y="742.9" width="1.4" height="1.8" fill="#ECECEC"/><rect x="162.2" y="733.7" width="3.0" height="1.9" fill="#ECECEC"/><rect x="177.7" y="685.7" width="3.6" height="1.5" fill="none" stroke="#ECECEC" stroke-width="0.9"/><rect x="177.9" y="689.7" width="2.1" height="1.8" fill="#ECECEC"/><rect x="179.3" y="686.2" width="1.4" height="2.2" fill="#ECECEC"/><rect x="183.3" y="691.8" width="3.7" height="2.5" fill="#ECECEC"/><rect x="177.3" y="690.9" width="3.1" height="1.5" fill="#ECECEC"/><rect x="181.9" y="686.5" width="3.6" height="1.5" fill="none" stroke="#ECECEC" stroke-width="0.9"/><rect x="178.4" y="685.1" width="3.8" height="2.2" fill="none" stroke="#ECECEC" stroke-width="0.9"/><rect x="177.4" y="684.3" width="1.5" height="1.2" fill="#ECECEC"/><rect x="68.7" y="712.2" width="3.0" height="1.2" fill="none" stroke="#ECECEC" stroke-width="0.9"/><rect x="88.6" y="714.6" width="1.8" height="1.7" fill="none" stroke="#ECECEC" stroke-width="0.9"/><rect x="80.3" y="710.3" width="3.6" height="2.3" fill="#ECECEC"/><rect x="99.3" y="714.0" width="1.2" height="1.3" fill="#ECECEC"/><rect x="75.1" y="715.8" width="3.3" height="1.0" fill="none" stroke="#ECECEC" stroke-width="0.9"/><rect x="82.0" y="714.8" width="3.6" height="1.4" fill="#F4C462"/><rect x="83.1" y="715.9" width="3.1" height="2.2" fill="none" stroke="#ECECEC" stroke-width="0.9"/><rect x="90.8" y="713.0" width="1.2" height="2.2" fill="#ECECEC"/><rect x="102.0" y="711.1" width="3.4" height="0.9" fill="none" stroke="#ECECEC" stroke-width="0.9"/><rect x="97.5" y="711.9" width="2.7" height="2.7" fill="none" stroke="#ECECEC" stroke-width="0.9"/><rect x="61.3" y="804.0" width="0.9" height="11.9" fill="#ECECEC"/><rect x="65.6" y="804.0" width="0.9" height="11.9" fill="#ECECEC"/><rect x="70.7" y="804.0" width="0.9" height="11.9" fill="#ECECEC"/><rect x="74.9" y="804.0" width="0.9" height="11.9" fill="#ECECEC"/><rect x="80.0" y="804.0" width="0.9" height="11.9" fill="#ECECEC"/><rect x="84.3" y="804.0" width="0.9" height="11.9" fill="#ECECEC"/><rect x="194.2" y="672.3" width="2.4" height="6.1" fill="none" stroke="#ECECEC" stroke-width="1.3"/><rect x="199.3" y="672.3" width="2.4" height="6.1" fill="none" stroke="#ECECEC" stroke-width="1.3"/><rect x="204.4" y="672.3" width="2.4" height="6.1" fill="none" stroke="#ECECEC" stroke-width="1.3"/><rect x="209.5" y="672.3" width="2.4" height="6.1" fill="none" stroke="#ECECEC" stroke-width="1.3"/><rect x="214.6" y="672.3" width="2.4" height="6.1" fill="none" stroke="#ECECEC" stroke-width="1.3"/><rect x="218.0" y="672.3" width="2.4" height="6.1" fill="none" stroke="#ECECEC" stroke-width="1.3"/><rect x="166.1" y="679.2" width="3.4" height="1.7" fill="#F4C462"/><rect x="233.0" y="802.8" width="1.7" height="5.5" fill="none" stroke="#ECECEC" stroke-width="1"/><rect x="235.7" y="802.8" width="1.7" height="5.5" fill="none" stroke="#ECECEC" stroke-width="1"/><rect x="238.5" y="802.8" width="1.7" height="5.5" fill="none" stroke="#ECECEC" stroke-width="1"/><rect x="241.2" y="802.8" width="1.7" height="5.5" fill="none" stroke="#ECECEC" stroke-width="1"/><rect x="243.9" y="802.8" width="1.7" height="5.5" fill="none" stroke="#ECECEC" stroke-width="1"/><rect x="246.6" y="802.8" width="1.7" height="5.5" fill="none" stroke="#ECECEC" stroke-width="1"/><rect x="249.4" y="802.8" width="1.7" height="5.5" fill="none" stroke="#ECECEC" stroke-width="1"/><rect x="252.1" y="802.8" width="1.7" height="5.5" fill="none" stroke="#ECECEC" stroke-width="1"/><rect x="254.8" y="802.8" width="1.7" height="5.5" fill="none" stroke="#ECECEC" stroke-width="1"/><rect x="257.5" y="802.8" width="1.7" height="5.5" fill="none" stroke="#ECECEC" stroke-width="1"/><rect x="260.3" y="802.8" width="1.7" height="5.5" fill="none" stroke="#ECECEC" stroke-width="1"/><rect x="263.0" y="802.8" width="1.7" height="5.5" fill="none" stroke="#ECECEC" stroke-width="1"/><rect x="248.7" y="802.3" width="3.4" height="6.8" fill="#30D030"/><rect x="229.1" y="753.8" width="2.6" height="2.6" fill="none" stroke="#ECECEC" stroke-width="1"/><g fill="#FFF"><rect x="12" y="713" width="2" height="1"/><rect x="17" y="713" width="2" height="1"/><rect x="22" y="713" width="2" height="1"/><rect x="19" y="718" width="2" height="1"/><rect x="24" y="718" width="2" height="1"/><rect x="18" y="726" width="2" height="1"/><rect x="23" y="726" width="2" height="1"/><rect x="14" y="735" width="2" height="1"/><rect x="19" y="735" width="2" height="1"/><rect x="24" y="735" width="2" height="1"/><rect x="31" y="770" width="2" height="1"/><rect x="32" y="784" width="2" height="1"/><rect x="34" y="784" width="2" height="1"/><rect x="150" y="809" width="2" height="1"/></g></g></svg>
<div style="position:absolute;left:0px;top:816px;width:281px;height:29px;background:#ACA897;"></div>
<div style="position:absolute;left:0px;top:828px;width:29px;height:17px;background:#ECE9D8;"></div>
<svg style="left:0;top:0" width="282" height="845" viewBox="0 0 282 845"><path d="M3 836.5L7 832.5V840.5Z" fill="#000" stroke="#000" stroke-width="0.8"/><path d="M18.5 832.5L22 836.5L18.5 840.5Z" fill="#A8A496"/><path d="M29.5 828.5H96L90 843.5H36Z" fill="#ECE9D8" stroke="#6E6B5E"/><path d="M96 828.5H163L169 843.5H103Z" fill="#ECE9D8" stroke="#6E6B5E"/><path d="M165 836L171 843.5H199L205.5 828.5" fill="none" stroke="#6E6B5E"/><path d="M205.5 828.5H275L268.5 843.5H211.5Z" fill="#ECE9D8" stroke="#6E6B5E"/><text x="43.4" y="839" font-family="Liberation Sans" font-size="11.5" fill="#000" textLength="38.6" lengthAdjust="spacingAndGlyphs">Projects</text><text x="106.5" y="839" font-family="Liberation Sans" font-size="11.5" fill="#000" textLength="46" lengthAdjust="spacingAndGlyphs">Navigator</text><text x="173.8" y="839" font-family="Liberation Sans" font-size="11.5" font-weight="bold" fill="#FFF" textLength="20.3" lengthAdjust="spacingAndGlyphs">PCB</text><text x="213.4" y="839" font-family="Liberation Sans" font-size="11.5" fill="#000" textLength="45.2" lengthAdjust="spacingAndGlyphs">PCB Filter</text></svg>
<div style="position:absolute;left:282px;top:78px;width:955px;height:29px;background:#ECE9D8;"></div>
<div style="position:absolute;left:285px;top:80px;width:103px;height:23px;background:#ECE9D8;border:1px solid #ACA899;border-radius:3px;"></div><svg style="left:291px;top:85px" width="16" height="14" viewBox="0 0 16 14"><defs><linearGradient id="gs285" x1="0" y1="0" x2="1" y2="1"><stop offset="0" stop-color="#FFF0A0"/><stop offset="1" stop-color="#E0A030"/></linearGradient></defs><rect x="0.5" y="0.5" width="14" height="12" fill="url(#gs285)" stroke="#5060A0"/><rect x="7.5" y="7.5" width="7" height="5" fill="#F4B840" stroke="#805818"/><path d="M9 9.5H14M9 11H14" stroke="#805818" stroke-width="0.8"/></svg><div style="position:absolute;left:310px;top:87px;font:normal 11px/11px 'Liberation Sans', sans-serif;color:#000;white-space:nowrap;letter-spacing:-0.28px;">Sheet1.SchDoc</div>
<div style="position:absolute;left:392px;top:80px;width:94px;height:23px;background:#ECE9D8;border:1px solid #ACA899;border-radius:3px;"></div><svg style="left:398px;top:85px" width="17" height="14" viewBox="0 0 17 14"><rect x="0.5" y="1.5" width="15" height="10" fill="#147838" stroke="#0A3A1A"/><path d="M2 4H14M2 6.5H14M2 9H14" stroke="#0A3A1A" stroke-width="0.9"/><path d="M3.5 2V11M6.5 2V11M9.5 2V11M12.5 2V11" stroke="#90E0A0" stroke-width="1"/><rect x="8" y="11" width="7" height="2.5" fill="#E8D040"/></svg><div style="position:absolute;left:417px;top:87px;font:normal 11px/11px 'Liberation Sans', sans-serif;color:#000;white-space:nowrap;letter-spacing:-0.28px;">PCB1.PcbDoc</div>
<div style="position:absolute;left:490px;top:80px;width:149px;height:23px;background:#FCFCF6;border:1px solid #ACA899;border-radius:3px;"></div><svg style="left:496px;top:85px" width="17" height="14" viewBox="0 0 17 14"><rect x="0.5" y="1.5" width="15" height="10" fill="#147838" stroke="#0A3A1A"/><path d="M2 4H14M2 6.5H14M2 9H14" stroke="#0A3A1A" stroke-width="0.9"/><path d="M3.5 2V11M6.5 2V11M9.5 2V11M12.5 2V11" stroke="#90E0A0" stroke-width="1"/><rect x="8" y="11" width="7" height="2.5" fill="#E8D040"/></svg><div style="position:absolute;left:515px;top:87px;font:normal 11px/11px 'Liberation Sans', sans-serif;color:#000;white-space:nowrap;letter-spacing:-0.28px;">rf_board_2_2G.PcbDoc *</div>
<div style="position:absolute;left:643px;top:80px;width:112px;height:23px;background:#ECE9D8;border:1px solid #ACA899;border-radius:3px;"></div><svg style="left:649px;top:85px" width="16" height="14" viewBox="0 0 16 14"><defs><linearGradient id="gs643" x1="0" y1="0" x2="1" y2="1"><stop offset="0" stop-color="#FFF0A0"/><stop offset="1" stop-color="#E0A030"/></linearGradient></defs><rect x="0.5" y="0.5" width="14" height="12" fill="url(#gs643)" stroke="#5060A0"/><rect x="7.5" y="7.5" width="7" height="5" fill="#F4B840" stroke="#805818"/><path d="M9 9.5H14M9 11H14" stroke="#805818" stroke-width="0.8"/></svg><div style="position:absolute;left:668px;top:87px;font:normal 11px/11px 'Liberation Sans', sans-serif;color:#000;white-space:nowrap;letter-spacing:-0.28px;">WC_LCD.SchDoc</div>
<div style="position:absolute;left:759px;top:80px;width:148px;height:23px;background:#ECE9D8;border:1px solid #ACA899;border-radius:3px;"></div><svg style="left:765px;top:85px" width="17" height="14" viewBox="0 0 17 14"><rect x="0.5" y="1.5" width="15" height="10" fill="#147838" stroke="#0A3A1A"/><path d="M2 4H14M2 6.5H14M2 9H14" stroke="#0A3A1A" stroke-width="0.9"/><path d="M3.5 2V11M6.5 2V11M9.5 2V11M12.5 2V11" stroke="#90E0A0" stroke-width="1"/><rect x="8" y="11" width="7" height="2.5" fill="#E8D040"/></svg><div style="position:absolute;left:784px;top:87px;font:normal 11px/11px 'Liberation Sans', sans-serif;color:#000;white-space:nowrap;letter-spacing:-0.28px;">WeatherChannel.PcbDoc</div>
<div style="position:absolute;left:911px;top:80px;width:144px;height:23px;background:#ECE9D8;border:1px solid #ACA899;border-radius:3px;"></div><svg style="left:917px;top:85px" width="17" height="14" viewBox="0 0 17 14"><rect x="0.5" y="1.5" width="15" height="10" fill="#147838" stroke="#0A3A1A"/><path d="M2 4H14M2 6.5H14M2 9H14" stroke="#0A3A1A" stroke-width="0.9"/><path d="M3.5 2V11M6.5 2V11M9.5 2V11M12.5 2V11" stroke="#90E0A0" stroke-width="1"/><rect x="8" y="11" width="7" height="2.5" fill="#E8D040"/></svg><div style="position:absolute;left:936px;top:87px;font:normal 11px/11px 'Liberation Sans', sans-serif;color:#000;white-space:nowrap;letter-spacing:-0.28px;">PCB Benchmark.pcbdoc</div>
<svg style="left:0;top:0" width="1237" height="845" viewBox="0 0 1237 845"><g clip-path="url(#cvc)"><rect x="282" y="107" width="955" height="701" fill="#000"/><rect x="282" y="112" width="955" height="12" fill="#999900"/><rect x="282" y="658" width="955" height="12" fill="#999900"/><g fill="#C0C0C0"><rect x="344" y="132" width="1" height="1"/><rect x="344" y="248" width="1" height="1"/><rect x="344" y="363" width="1" height="1"/><rect x="344" y="479" width="1" height="1"/><rect x="344" y="595" width="1" height="1"/><rect x="344" y="710" width="1" height="1"/><rect x="460" y="132" width="1" height="1"/><rect x="460" y="248" width="1" height="1"/><rect x="460" y="363" width="1" height="1"/><rect x="460" y="479" width="1" height="1"/><rect x="460" y="595" width="1" height="1"/><rect x="460" y="710" width="1" height="1"/><rect x="576" y="132" width="1" height="1"/><rect x="576" y="248" width="1" height="1"/><rect x="576" y="363" width="1" height="1"/><rect x="576" y="479" width="1" height="1"/><rect x="576" y="595" width="1" height="1"/><rect x="576" y="710" width="1" height="1"/><rect x="692" y="132" width="1" height="1"/><rect x="692" y="248" width="1" height="1"/><rect x="692" y="363" width="1" height="1"/><rect x="692" y="479" width="1" height="1"/><rect x="692" y="595" width="1" height="1"/><rect x="692" y="710" width="1" height="1"/><rect x="807" y="132" width="1" height="1"/><rect x="807" y="248" width="1" height="1"/><rect x="807" y="363" width="1" height="1"/><rect x="807" y="479" width="1" height="1"/><rect x="807" y="595" width="1" height="1"/><rect x="807" y="710" width="1" height="1"/><rect x="923" y="132" width="1" height="1"/><rect x="923" y="248" width="1" height="1"/><rect x="923" y="363" width="1" height="1"/><rect x="923" y="479" width="1" height="1"/><rect x="923" y="595" width="1" height="1"/><rect x="923" y="710" width="1" height="1"/><rect x="1039" y="132" width="1" height="1"/><rect x="1039" y="248" width="1" height="1"/><rect x="1039" y="363" width="1" height="1"/><rect x="1039" y="479" width="1" height="1"/><rect x="1039" y="595" width="1" height="1"/><rect x="1039" y="710" width="1" height="1"/><rect x="1154" y="132" width="1" height="1"/><rect x="1154" y="248" width="1" height="1"/><rect x="1154" y="363" width="1" height="1"/><rect x="1154" y="479" width="1" height="1"/><rect x="1154" y="595" width="1" height="1"/><rect x="1154" y="710" width="1" height="1"/><rect x="1270" y="132" width="1" height="1"/><rect x="1270" y="248" width="1" height="1"/><rect x="1270" y="363" width="1" height="1"/><rect x="1270" y="479" width="1" height="1"/><rect x="1270" y="595" width="1" height="1"/><rect x="1270" y="710" width="1" height="1"/></g><polygon points="304.7,167.9 301.3,176.1 295.1,182.3 286.9,185.7 278.1,185.7 269.9,182.3 263.7,176.1 260.3,167.9 260.3,159.1 263.7,150.9 269.9,144.7 278.1,141.3 286.9,141.3 295.1,144.7 301.3,150.9 304.7,159.1" fill="#808080"/><polygon points="296.1,166.6 293.4,172.2 288.6,176.1 282.5,177.5 276.4,176.1 271.6,172.2 268.9,166.6 268.9,160.4 271.6,154.8 276.4,150.9 282.5,149.5 288.6,150.9 293.4,154.8 296.1,160.4" fill="#005A5A"/><text x="283.0" y="166.8" font-family="Liberation Sans" font-size="10.5" fill="#000" text-anchor="middle" textLength="55.2" lengthAdjust="spacingAndGlyphs">CPCI_J5_P_D1</text><polygon points="395.7,167.9 392.3,176.1 386.1,182.3 377.9,185.7 369.1,185.7 360.9,182.3 354.7,176.1 351.3,167.9 351.3,159.1 354.7,150.9 360.9,144.7 369.1,141.3 377.9,141.3 386.1,144.7 392.3,150.9 395.7,159.1" fill="#808080"/><polygon points="387.1,166.6 384.4,172.2 379.6,176.1 373.5,177.5 367.4,176.1 362.6,172.2 359.9,166.6 359.9,160.4 362.6,154.8 367.4,150.9 373.5,149.5 379.6,150.9 384.4,154.8 387.1,160.4" fill="#005A5A"/><text x="374.0" y="166.8" font-family="Liberation Sans" font-size="10.5" fill="#000" text-anchor="middle" textLength="55.2" lengthAdjust="spacingAndGlyphs">CPCI_J5_P_D1</text><polygon points="486.7,167.9 483.3,176.1 477.1,182.3 468.9,185.7 460.1,185.7 451.9,182.3 445.7,176.1 442.3,167.9 442.3,159.1 445.7,150.9 451.9,144.7 460.1,141.3 468.9,141.3 477.1,144.7 483.3,150.9 486.7,159.1" fill="#808080"/><polygon points="478.1,166.6 475.4,172.2 470.6,176.1 464.5,177.5 458.4,176.1 453.6,172.2 450.9,166.6 450.9,160.4 453.6,154.8 458.4,150.9 464.5,149.5 470.6,150.9 475.4,154.8 478.1,160.4" fill="#005A5A"/><text x="465.0" y="166.8" font-family="Liberation Sans" font-size="10.5" fill="#000" text-anchor="middle" textLength="55.2" lengthAdjust="spacingAndGlyphs">CPCI_J5_P_D1</text><polygon points="577.7,167.9 574.3,176.1 568.1,182.3 559.9,185.7 551.1,185.7 542.9,182.3 536.7,176.1 533.3,167.9 533.3,159.1 536.7,150.9 542.9,144.7 551.1,141.3 559.9,141.3 568.1,144.7 574.3,150.9 577.7,159.1" fill="#808080"/><polygon points="569.1,166.6 566.4,172.2 561.6,176.1 555.5,177.5 549.4,176.1 544.6,172.2 541.9,166.6 541.9,160.4 544.6,154.8 549.4,150.9 555.5,149.5 561.6,150.9 566.4,154.8 569.1,160.4" fill="#005A5A"/><text x="556.0" y="166.8" font-family="Liberation Sans" font-size="10.5" fill="#000" text-anchor="middle" textLength="55.2" lengthAdjust="spacingAndGlyphs">CPCI_J5_P_D1</text><polygon points="668.7,167.9 665.3,176.1 659.1,182.3 650.9,185.7 642.1,185.7 633.9,182.3 627.7,176.1 624.3,167.9 624.3,159.1 627.7,150.9 633.9,144.7 642.1,141.3 650.9,141.3 659.1,144.7 665.3,150.9 668.7,159.1" fill="#808080"/><polygon points="660.1,166.6 657.4,172.2 652.6,176.1 646.5,177.5 640.4,176.1 635.6,172.2 632.9,166.6 632.9,160.4 635.6,154.8 640.4,150.9 646.5,149.5 652.6,150.9 657.4,154.8 660.1,160.4" fill="#005A5A"/><text x="647.0" y="166.8" font-family="Liberation Sans" font-size="10.5" fill="#000" text-anchor="middle" textLength="55.2" lengthAdjust="spacingAndGlyphs">CPCI_J5_P_D1</text><polygon points="759.7,167.9 756.3,176.1 750.1,182.3 741.9,185.7 733.1,185.7 724.9,182.3 718.7,176.1 715.3,167.9 715.3,159.1 718.7,150.9 724.9,144.7 733.1,141.3 741.9,141.3 750.1,144.7 756.3,150.9 759.7,159.1" fill="#808080"/><polygon points="751.1,166.6 748.4,172.2 743.6,176.1 737.5,177.5 731.4,176.1 726.6,172.2 723.9,166.6 723.9,160.4 726.6,154.8 731.4,150.9 737.5,149.5 743.6,150.9 748.4,154.8 751.1,160.4" fill="#005A5A"/><text x="738.0" y="166.8" font-family="Liberation Sans" font-size="10.5" fill="#000" text-anchor="middle" textLength="55.2" lengthAdjust="spacingAndGlyphs">CPCI_J5_P_D1</text><polygon points="850.7,167.9 847.3,176.1 841.1,182.3 832.9,185.7 824.1,185.7 815.9,182.3 809.7,176.1 806.3,167.9 806.3,159.1 809.7,150.9 815.9,144.7 824.1,141.3 832.9,141.3 841.1,144.7 847.3,150.9 850.7,159.1" fill="#808080"/><polygon points="842.1,166.6 839.4,172.2 834.6,176.1 828.5,177.5 822.4,176.1 817.6,172.2 814.9,166.6 814.9,160.4 817.6,154.8 822.4,150.9 828.5,149.5 834.6,150.9 839.4,154.8 842.1,160.4" fill="#005A5A"/><text x="829.0" y="166.8" font-family="Liberation Sans" font-size="10.5" fill="#000" text-anchor="middle" textLength="55.2" lengthAdjust="spacingAndGlyphs">CPCI_J5_P_D1</text><polygon points="941.7,167.9 938.3,176.1 932.1,182.3 923.9,185.7 915.1,185.7 906.9,182.3 900.7,176.1 897.3,167.9 897.3,159.1 900.7,150.9 906.9,144.7 915.1,141.3 923.9,141.3 932.1,144.7 938.3,150.9 941.7,159.1" fill="#808080"/><polygon points="933.1,166.6 930.4,172.2 925.6,176.1 919.5,177.5 913.4,176.1 908.6,172.2 905.9,166.6 905.9,160.4 908.6,154.8 913.4,150.9 919.5,149.5 925.6,150.9 930.4,154.8 933.1,160.4" fill="#005A5A"/><text x="920.0" y="166.8" font-family="Liberation Sans" font-size="10.5" fill="#000" text-anchor="middle" textLength="55.2" lengthAdjust="spacingAndGlyphs">CPCI_J5_P_D1</text><polygon points="1032.7,167.9 1029.3,176.1 1023.1,182.3 1014.9,185.7 1006.1,185.7 997.9,182.3 991.7,176.1 988.3,167.9 988.3,159.1 991.7,150.9 997.9,144.7 1006.1,141.3 1014.9,141.3 1023.1,144.7 1029.3,150.9 1032.7,159.1" fill="#808080"/><polygon points="1024.1,166.6 1021.4,172.2 1016.6,176.1 1010.5,177.5 1004.4,176.1 999.6,172.2 996.9,166.6 996.9,160.4 999.6,154.8 1004.4,150.9 1010.5,149.5 1016.6,150.9 1021.4,154.8 1024.1,160.4" fill="#005A5A"/><text x="1011.0" y="166.8" font-family="Liberation Sans" font-size="10.5" fill="#000" text-anchor="middle" textLength="55.2" lengthAdjust="spacingAndGlyphs">CPCI_J5_P_D1</text><polygon points="1123.7,167.9 1120.3,176.1 1114.1,182.3 1105.9,185.7 1097.1,185.7 1088.9,182.3 1082.7,176.1 1079.3,167.9 1079.3,159.1 1082.7,150.9 1088.9,144.7 1097.1,141.3 1105.9,141.3 1114.1,144.7 1120.3,150.9 1123.7,159.1" fill="#808080"/><polygon points="1115.1,166.6 1112.4,172.2 1107.6,176.1 1101.5,177.5 1095.4,176.1 1090.6,172.2 1087.9,166.6 1087.9,160.4 1090.6,154.8 1095.4,150.9 1101.5,149.5 1107.6,150.9 1112.4,154.8 1115.1,160.4" fill="#005A5A"/><text x="1102.0" y="166.8" font-family="Liberation Sans" font-size="10.5" fill="#000" text-anchor="middle" textLength="55.2" lengthAdjust="spacingAndGlyphs">CPCI_J5_P_D1</text><polygon points="1214.7,167.9 1211.3,176.1 1205.1,182.3 1196.9,185.7 1188.1,185.7 1179.9,182.3 1173.7,176.1 1170.3,167.9 1170.3,159.1 1173.7,150.9 1179.9,144.7 1188.1,141.3 1196.9,141.3 1205.1,144.7 1211.3,150.9 1214.7,159.1" fill="#808080"/><polygon points="1206.1,166.6 1203.4,172.2 1198.6,176.1 1192.5,177.5 1186.4,176.1 1181.6,172.2 1178.9,166.6 1178.9,160.4 1181.6,154.8 1186.4,150.9 1192.5,149.5 1198.6,150.9 1203.4,154.8 1206.1,160.4" fill="#005A5A"/><text x="1193.0" y="166.8" font-family="Liberation Sans" font-size="10.5" fill="#000" text-anchor="middle" textLength="55.2" lengthAdjust="spacingAndGlyphs">CPCI_J5_P_D1</text><polygon points="304.7,259.1 301.3,267.3 295.1,273.5 286.9,276.9 278.1,276.9 269.9,273.5 263.7,267.3 260.3,259.1 260.3,250.3 263.7,242.1 269.9,235.9 278.1,232.5 286.9,232.5 295.1,235.9 301.3,242.1 304.7,250.3" fill="#808080"/><polygon points="296.1,257.8 293.4,263.4 288.6,267.3 282.5,268.7 276.4,267.3 271.6,263.4 268.9,257.8 268.9,251.6 271.6,246.0 276.4,242.1 282.5,240.7 288.6,242.1 293.4,246.0 296.1,251.6" fill="#005A5A"/><text x="283.0" y="258.0" font-family="Liberation Sans" font-size="10.5" fill="#000" text-anchor="middle" textLength="55.2" lengthAdjust="spacingAndGlyphs">CPCI_J5_N_D1</text><polygon points="395.7,259.1 392.3,267.3 386.1,273.5 377.9,276.9 369.1,276.9 360.9,273.5 354.7,267.3 351.3,259.1 351.3,250.3 354.7,242.1 360.9,235.9 369.1,232.5 377.9,232.5 386.1,235.9 392.3,242.1 395.7,250.3" fill="#808080"/><polygon points="387.1,257.8 384.4,263.4 379.6,267.3 373.5,268.7 367.4,267.3 362.6,263.4 359.9,257.8 359.9,251.6 362.6,246.0 367.4,242.1 373.5,240.7 379.6,242.1 384.4,246.0 387.1,251.6" fill="#005A5A"/><text x="374.0" y="258.0" font-family="Liberation Sans" font-size="10.5" fill="#000" text-anchor="middle" textLength="55.2" lengthAdjust="spacingAndGlyphs">CPCI_J5_N_D1</text><polygon points="486.7,259.1 483.3,267.3 477.1,273.5 468.9,276.9 460.1,276.9 451.9,273.5 445.7,267.3 442.3,259.1 442.3,250.3 445.7,242.1 451.9,235.9 460.1,232.5 468.9,232.5 477.1,235.9 483.3,242.1 486.7,250.3" fill="#808080"/><polygon points="478.1,257.8 475.4,263.4 470.6,267.3 464.5,268.7 458.4,267.3 453.6,263.4 450.9,257.8 450.9,251.6 453.6,246.0 458.4,242.1 464.5,240.7 470.6,242.1 475.4,246.0 478.1,251.6" fill="#005A5A"/><text x="465.0" y="258.0" font-family="Liberation Sans" font-size="10.5" fill="#000" text-anchor="middle" textLength="55.2" lengthAdjust="spacingAndGlyphs">CPCI_J5_N_D1</text><polygon points="577.7,259.1 574.3,267.3 568.1,273.5 559.9,276.9 551.1,276.9 542.9,273.5 536.7,267.3 533.3,259.1 533.3,250.3 536.7,242.1 542.9,235.9 551.1,232.5 559.9,232.5 568.1,235.9 574.3,242.1 577.7,250.3" fill="#808080"/><polygon points="569.1,257.8 566.4,263.4 561.6,267.3 555.5,268.7 549.4,267.3 544.6,263.4 541.9,257.8 541.9,251.6 544.6,246.0 549.4,242.1 555.5,240.7 561.6,242.1 566.4,246.0 569.1,251.6" fill="#005A5A"/><text x="556.0" y="258.0" font-family="Liberation Sans" font-size="10.5" fill="#000" text-anchor="middle" textLength="55.2" lengthAdjust="spacingAndGlyphs">CPCI_J5_N_D1</text><polygon points="668.7,259.1 665.3,267.3 659.1,273.5 650.9,276.9 642.1,276.9 633.9,273.5 627.7,267.3 624.3,259.1 624.3,250.3 627.7,242.1 633.9,235.9 642.1,232.5 650.9,232.5 659.1,235.9 665.3,242.1 668.7,250.3" fill="#808080"/><polygon points="660.1,257.8 657.4,263.4 652.6,267.3 646.5,268.7 640.4,267.3 635.6,263.4 632.9,257.8 632.9,251.6 635.6,246.0 640.4,242.1 646.5,240.7 652.6,242.1 657.4,246.0 660.1,251.6" fill="#005A5A"/><text x="647.0" y="258.0" font-family="Liberation Sans" font-size="10.5" fill="#000" text-anchor="middle" textLength="55.2" lengthAdjust="spacingAndGlyphs">CPCI_J5_N_D1</text><polygon points="759.7,259.1 756.3,267.3 750.1,273.5 741.9,276.9 733.1,276.9 724.9,273.5 718.7,267.3 715.3,259.1 715.3,250.3 718.7,242.1 724.9,235.9 733.1,232.5 741.9,232.5 750.1,235.9 756.3,242.1 759.7,250.3" fill="#808080"/><polygon points="751.1,257.8 748.4,263.4 743.6,267.3 737.5,268.7 731.4,267.3 726.6,263.4 723.9,257.8 723.9,251.6 726.6,246.0 731.4,242.1 737.5,240.7 743.6,242.1 748.4,246.0 751.1,251.6" fill="#005A5A"/><text x="738.0" y="258.0" font-family="Liberation Sans" font-size="10.5" fill="#000" text-anchor="middle" textLength="55.2" lengthAdjust="spacingAndGlyphs">CPCI_J5_N_D1</text><polygon points="850.7,259.1 847.3,267.3 841.1,273.5 832.9,276.9 824.1,276.9 815.9,273.5 809.7,267.3 806.3,259.1 806.3,250.3 809.7,242.1 815.9,235.9 824.1,232.5 832.9,232.5 841.1,235.9 847.3,242.1 850.7,250.3" fill="#808080"/><polygon points="842.1,257.8 839.4,263.4 834.6,267.3 828.5,268.7 822.4,267.3 817.6,263.4 814.9,257.8 814.9,251.6 817.6,246.0 822.4,242.1 828.5,240.7 834.6,242.1 839.4,246.0 842.1,251.6" fill="#005A5A"/><text x="829.0" y="258.0" font-family="Liberation Sans" font-size="10.5" fill="#000" text-anchor="middle" textLength="55.2" lengthAdjust="spacingAndGlyphs">CPCI_J5_N_D1</text><polygon points="941.7,259.1 938.3,267.3 932.1,273.5 923.9,276.9 915.1,276.9 906.9,273.5 900.7,267.3 897.3,259.1 897.3,250.3 900.7,242.1 906.9,235.9 915.1,232.5 923.9,232.5 932.1,235.9 938.3,242.1 941.7,250.3" fill="#808080"/><polygon points="933.1,257.8 930.4,263.4 925.6,267.3 919.5,268.7 913.4,267.3 908.6,263.4 905.9,257.8 905.9,251.6 908.6,246.0 913.4,242.1 919.5,240.7 925.6,242.1 930.4,246.0 933.1,251.6" fill="#005A5A"/><text x="920.0" y="258.0" font-family="Liberation Sans" font-size="10.5" fill="#000" text-anchor="middle" textLength="55.2" lengthAdjust="spacingAndGlyphs">CPCI_J5_N_D1</text><polygon points="1032.7,259.1 1029.3,267.3 1023.1,273.5 1014.9,276.9 1006.1,276.9 997.9,273.5 991.7,267.3 988.3,259.1 988.3,250.3 991.7,242.1 997.9,235.9 1006.1,232.5 1014.9,232.5 1023.1,235.9 1029.3,242.1 1032.7,250.3" fill="#808080"/><polygon points="1024.1,257.8 1021.4,263.4 1016.6,267.3 1010.5,268.7 1004.4,267.3 999.6,263.4 996.9,257.8 996.9,251.6 999.6,246.0 1004.4,242.1 1010.5,240.7 1016.6,242.1 1021.4,246.0 1024.1,251.6" fill="#005A5A"/><text x="1011.0" y="258.0" font-family="Liberation Sans" font-size="10.5" fill="#000" text-anchor="middle" textLength="55.2" lengthAdjust="spacingAndGlyphs">CPCI_J5_N_D1</text><polygon points="1123.7,259.1 1120.3,267.3 1114.1,273.5 1105.9,276.9 1097.1,276.9 1088.9,273.5 1082.7,267.3 1079.3,259.1 1079.3,250.3 1082.7,242.1 1088.9,235.9 1097.1,232.5 1105.9,232.5 1114.1,235.9 1120.3,242.1 1123.7,250.3" fill="#808080"/><polygon points="1115.1,257.8 1112.4,263.4 1107.6,267.3 1101.5,268.7 1095.4,267.3 1090.6,263.4 1087.9,257.8 1087.9,251.6 1090.6,246.0 1095.4,242.1 1101.5,240.7 1107.6,242.1 1112.4,246.0 1115.1,251.6" fill="#005A5A"/><text x="1102.0" y="258.0" font-family="Liberation Sans" font-size="10.5" fill="#000" text-anchor="middle" textLength="55.2" lengthAdjust="spacingAndGlyphs">CPCI_J5_N_D1</text><polygon points="1214.7,259.1 1211.3,267.3 1205.1,273.5 1196.9,276.9 1188.1,276.9 1179.9,273.5 1173.7,267.3 1170.3,259.1 1170.3,250.3 1173.7,242.1 1179.9,235.9 1188.1,232.5 1196.9,232.5 1205.1,235.9 1211.3,242.1 1214.7,250.3" fill="#808080"/><polygon points="1206.1,257.8 1203.4,263.4 1198.6,267.3 1192.5,268.7 1186.4,267.3 1181.6,263.4 1178.9,257.8 1178.9,251.6 1181.6,246.0 1186.4,242.1 1192.5,240.7 1198.6,242.1 1203.4,246.0 1206.1,251.6" fill="#005A5A"/><text x="1193.0" y="258.0" font-family="Liberation Sans" font-size="10.5" fill="#000" text-anchor="middle" textLength="55.2" lengthAdjust="spacingAndGlyphs">CPCI_J5_N_D1</text><polygon points="304.7,350.3 301.3,358.5 295.1,364.7 286.9,368.1 278.1,368.1 269.9,364.7 263.7,358.5 260.3,350.3 260.3,341.5 263.7,333.3 269.9,327.1 278.1,323.7 286.9,323.7 295.1,327.1 301.3,333.3 304.7,341.5" fill="#808080"/><polygon points="296.1,349.0 293.4,354.6 288.6,358.5 282.5,359.9 276.4,358.5 271.6,354.6 268.9,349.0 268.9,342.8 271.6,337.2 276.4,333.3 282.5,331.9 288.6,333.3 293.4,337.2 296.1,342.8" fill="#005A5A"/><text x="273.0" y="349.2" font-family="Liberation Sans" font-size="9.6" fill="#000" textLength="17.5" lengthAdjust="spacingAndGlyphs">GND</text><polygon points="395.7,350.3 392.3,358.5 386.1,364.7 377.9,368.1 369.1,368.1 360.9,364.7 354.7,358.5 351.3,350.3 351.3,341.5 354.7,333.3 360.9,327.1 369.1,323.7 377.9,323.7 386.1,327.1 392.3,333.3 395.7,341.5" fill="#808080"/><polygon points="387.1,349.0 384.4,354.6 379.6,358.5 373.5,359.9 367.4,358.5 362.6,354.6 359.9,349.0 359.9,342.8 362.6,337.2 367.4,333.3 373.5,331.9 379.6,333.3 384.4,337.2 387.1,342.8" fill="#005A5A"/><text x="364.0" y="349.2" font-family="Liberation Sans" font-size="9.6" fill="#000" textLength="17.5" lengthAdjust="spacingAndGlyphs">GND</text><polygon points="486.7,350.3 483.3,358.5 477.1,364.7 468.9,368.1 460.1,368.1 451.9,364.7 445.7,358.5 442.3,350.3 442.3,341.5 445.7,333.3 451.9,327.1 460.1,323.7 468.9,323.7 477.1,327.1 483.3,333.3 486.7,341.5" fill="#808080"/><polygon points="478.1,349.0 475.4,354.6 470.6,358.5 464.5,359.9 458.4,358.5 453.6,354.6 450.9,349.0 450.9,342.8 453.6,337.2 458.4,333.3 464.5,331.9 470.6,333.3 475.4,337.2 478.1,342.8" fill="#005A5A"/><text x="455.0" y="349.2" font-family="Liberation Sans" font-size="9.6" fill="#000" textLength="17.5" lengthAdjust="spacingAndGlyphs">GND</text><polygon points="577.7,350.3 574.3,358.5 568.1,364.7 559.9,368.1 551.1,368.1 542.9,364.7 536.7,358.5 533.3,350.3 533.3,341.5 536.7,333.3 542.9,327.1 551.1,323.7 559.9,323.7 568.1,327.1 574.3,333.3 577.7,341.5" fill="#808080"/><polygon points="569.1,349.0 566.4,354.6 561.6,358.5 555.5,359.9 549.4,358.5 544.6,354.6 541.9,349.0 541.9,342.8 544.6,337.2 549.4,333.3 555.5,331.9 561.6,333.3 566.4,337.2 569.1,342.8" fill="#005A5A"/><text x="546.0" y="349.2" font-family="Liberation Sans" font-size="9.6" fill="#000" textLength="17.5" lengthAdjust="spacingAndGlyphs">GND</text><polygon points="668.7,350.3 665.3,358.5 659.1,364.7 650.9,368.1 642.1,368.1 633.9,364.7 627.7,358.5 624.3,350.3 624.3,341.5 627.7,333.3 633.9,327.1 642.1,323.7 650.9,323.7 659.1,327.1 665.3,333.3 668.7,341.5" fill="#808080"/><polygon points="660.1,349.0 657.4,354.6 652.6,358.5 646.5,359.9 640.4,358.5 635.6,354.6 632.9,349.0 632.9,342.8 635.6,337.2 640.4,333.3 646.5,331.9 652.6,333.3 657.4,337.2 660.1,342.8" fill="#005A5A"/><text x="637.0" y="349.2" font-family="Liberation Sans" font-size="9.6" fill="#000" textLength="17.5" lengthAdjust="spacingAndGlyphs">GND</text><polygon points="759.7,350.3 756.3,358.5 750.1,364.7 741.9,368.1 733.1,368.1 724.9,364.7 718.7,358.5 715.3,350.3 715.3,341.5 718.7,333.3 724.9,327.1 733.1,323.7 741.9,323.7 750.1,327.1 756.3,333.3 759.7,341.5" fill="#808080"/><polygon points="751.1,349.0 748.4,354.6 743.6,358.5 737.5,359.9 731.4,358.5 726.6,354.6 723.9,349.0 723.9,342.8 726.6,337.2 731.4,333.3 737.5,331.9 743.6,333.3 748.4,337.2 751.1,342.8" fill="#005A5A"/><text x="728.0" y="349.2" font-family="Liberation Sans" font-size="9.6" fill="#000" textLength="17.5" lengthAdjust="spacingAndGlyphs">GND</text><polygon points="850.7,350.3 847.3,358.5 841.1,364.7 832.9,368.1 824.1,368.1 815.9,364.7 809.7,358.5 806.3,350.3 806.3,341.5 809.7,333.3 815.9,327.1 824.1,323.7 832.9,323.7 841.1,327.1 847.3,333.3 850.7,341.5" fill="#808080"/><polygon points="842.1,349.0 839.4,354.6 834.6,358.5 828.5,359.9 822.4,358.5 817.6,354.6 814.9,349.0 814.9,342.8 817.6,337.2 822.4,333.3 828.5,331.9 834.6,333.3 839.4,337.2 842.1,342.8" fill="#005A5A"/><text x="819.0" y="349.2" font-family="Liberation Sans" font-size="9.6" fill="#000" textLength="17.5" lengthAdjust="spacingAndGlyphs">GND</text><polygon points="941.7,350.3 938.3,358.5 932.1,364.7 923.9,368.1 915.1,368.1 906.9,364.7 900.7,358.5 897.3,350.3 897.3,341.5 900.7,333.3 906.9,327.1 915.1,323.7 923.9,323.7 932.1,327.1 938.3,333.3 941.7,341.5" fill="#808080"/><polygon points="933.1,349.0 930.4,354.6 925.6,358.5 919.5,359.9 913.4,358.5 908.6,354.6 905.9,349.0 905.9,342.8 908.6,337.2 913.4,333.3 919.5,331.9 925.6,333.3 930.4,337.2 933.1,342.8" fill="#005A5A"/><text x="910.0" y="349.2" font-family="Liberation Sans" font-size="9.6" fill="#000" textLength="17.5" lengthAdjust="spacingAndGlyphs">GND</text><polygon points="1032.7,350.3 1029.3,358.5 1023.1,364.7 1014.9,368.1 1006.1,368.1 997.9,364.7 991.7,358.5 988.3,350.3 988.3,341.5 991.7,333.3 997.9,327.1 1006.1,323.7 1014.9,323.7 1023.1,327.1 1029.3,333.3 1032.7,341.5" fill="#808080"/><polygon points="1024.1,349.0 1021.4,354.6 1016.6,358.5 1010.5,359.9 1004.4,358.5 999.6,354.6 996.9,349.0 996.9,342.8 999.6,337.2 1004.4,333.3 1010.5,331.9 1016.6,333.3 1021.4,337.2 1024.1,342.8" fill="#005A5A"/><text x="1001.0" y="349.2" font-family="Liberation Sans" font-size="9.6" fill="#000" textLength="17.5" lengthAdjust="spacingAndGlyphs">GND</text><polygon points="1123.7,350.3 1120.3,358.5 1114.1,364.7 1105.9,368.1 1097.1,368.1 1088.9,364.7 1082.7,358.5 1079.3,350.3 1079.3,341.5 1082.7,333.3 1088.9,327.1 1097.1,323.7 1105.9,323.7 1114.1,327.1 1120.3,333.3 1123.7,341.5" fill="#808080"/><polygon points="1115.1,349.0 1112.4,354.6 1107.6,358.5 1101.5,359.9 1095.4,358.5 1090.6,354.6 1087.9,349.0 1087.9,342.8 1090.6,337.2 1095.4,333.3 1101.5,331.9 1107.6,333.3 1112.4,337.2 1115.1,342.8" fill="#005A5A"/><text x="1092.0" y="349.2" font-family="Liberation Sans" font-size="9.6" fill="#000" textLength="17.5" lengthAdjust="spacingAndGlyphs">GND</text><polygon points="1214.7,350.3 1211.3,358.5 1205.1,364.7 1196.9,368.1 1188.1,368.1 1179.9,364.7 1173.7,358.5 1170.3,350.3 1170.3,341.5 1173.7,333.3 1179.9,327.1 1188.1,323.7 1196.9,323.7 1205.1,327.1 1211.3,333.3 1214.7,341.5" fill="#808080"/><polygon points="1206.1,349.0 1203.4,354.6 1198.6,358.5 1192.5,359.9 1186.4,358.5 1181.6,354.6 1178.9,349.0 1178.9,342.8 1181.6,337.2 1186.4,333.3 1192.5,331.9 1198.6,333.3 1203.4,337.2 1206.1,342.8" fill="#005A5A"/><text x="1183.0" y="349.2" font-family="Liberation Sans" font-size="9.6" fill="#000" textLength="17.5" lengthAdjust="spacingAndGlyphs">GND</text><polygon points="304.7,441.5 301.3,449.7 295.1,455.9 286.9,459.3 278.1,459.3 269.9,455.9 263.7,449.7 260.3,441.5 260.3,432.7 263.7,424.5 269.9,418.3 278.1,414.9 286.9,414.9 295.1,418.3 301.3,424.5 304.7,432.7" fill="#808080"/><polygon points="296.1,440.2 293.4,445.8 288.6,449.7 282.5,451.1 276.4,449.7 271.6,445.8 268.9,440.2 268.9,434.0 271.6,428.4 276.4,424.5 282.5,423.1 288.6,424.5 293.4,428.4 296.1,434.0" fill="#005A5A"/><text x="283.0" y="440.4" font-family="Liberation Sans" font-size="10.5" fill="#000" text-anchor="middle" textLength="55.2" lengthAdjust="spacingAndGlyphs">CPCI_J5_P_A1</text><polygon points="395.7,441.5 392.3,449.7 386.1,455.9 377.9,459.3 369.1,459.3 360.9,455.9 354.7,449.7 351.3,441.5 351.3,432.7 354.7,424.5 360.9,418.3 369.1,414.9 377.9,414.9 386.1,418.3 392.3,424.5 395.7,432.7" fill="#808080"/><polygon points="387.1,440.2 384.4,445.8 379.6,449.7 373.5,451.1 367.4,449.7 362.6,445.8 359.9,440.2 359.9,434.0 362.6,428.4 367.4,424.5 373.5,423.1 379.6,424.5 384.4,428.4 387.1,434.0" fill="#005A5A"/><text x="374.0" y="440.4" font-family="Liberation Sans" font-size="10.5" fill="#000" text-anchor="middle" textLength="55.2" lengthAdjust="spacingAndGlyphs">CPCI_J5_P_A1</text><polygon points="486.7,441.5 483.3,449.7 477.1,455.9 468.9,459.3 460.1,459.3 451.9,455.9 445.7,449.7 442.3,441.5 442.3,432.7 445.7,424.5 451.9,418.3 460.1,414.9 468.9,414.9 477.1,418.3 483.3,424.5 486.7,432.7" fill="#C0C0C0"/><polygon points="478.1,440.2 475.4,445.8 470.6,449.7 464.5,451.1 458.4,449.7 453.6,445.8 450.9,440.2 450.9,434.0 453.6,428.4 458.4,424.5 464.5,423.1 470.6,424.5 475.4,428.4 478.1,434.0" fill="#008C8C"/><text x="465.0" y="440.4" font-family="Liberation Sans" font-size="10.5" fill="#F0E080" text-anchor="middle" textLength="55.2" lengthAdjust="spacingAndGlyphs">CPCI_J5_P_A1</text><polygon points="577.7,441.5 574.3,449.7 568.1,455.9 559.9,459.3 551.1,459.3 542.9,455.9 536.7,449.7 533.3,441.5 533.3,432.7 536.7,424.5 542.9,418.3 551.1,414.9 559.9,414.9 568.1,418.3 574.3,424.5 577.7,432.7" fill="#808080"/><polygon points="569.1,440.2 566.4,445.8 561.6,449.7 555.5,451.1 549.4,449.7 544.6,445.8 541.9,440.2 541.9,434.0 544.6,428.4 549.4,424.5 555.5,423.1 561.6,424.5 566.4,428.4 569.1,434.0" fill="#005A5A"/><text x="556.0" y="440.4" font-family="Liberation Sans" font-size="10.5" fill="#000" text-anchor="middle" textLength="55.2" lengthAdjust="spacingAndGlyphs">CPCI_J5_P_A1</text><polygon points="668.7,441.5 665.3,449.7 659.1,455.9 650.9,459.3 642.1,459.3 633.9,455.9 627.7,449.7 624.3,441.5 624.3,432.7 627.7,424.5 633.9,418.3 642.1,414.9 650.9,414.9 659.1,418.3 665.3,424.5 668.7,432.7" fill="#808080"/><polygon points="660.1,440.2 657.4,445.8 652.6,449.7 646.5,451.1 640.4,449.7 635.6,445.8 632.9,440.2 632.9,434.0 635.6,428.4 640.4,424.5 646.5,423.1 652.6,424.5 657.4,428.4 660.1,434.0" fill="#005A5A"/><text x="647.0" y="440.4" font-family="Liberation Sans" font-size="10.5" fill="#000" text-anchor="middle" textLength="55.2" lengthAdjust="spacingAndGlyphs">CPCI_J5_P_A1</text><polygon points="759.7,441.5 756.3,449.7 750.1,455.9 741.9,459.3 733.1,459.3 724.9,455.9 718.7,449.7 715.3,441.5 715.3,432.7 718.7,424.5 724.9,418.3 733.1,414.9 741.9,414.9 750.1,418.3 756.3,424.5 759.7,432.7" fill="#808080"/><polygon points="751.1,440.2 748.4,445.8 743.6,449.7 737.5,451.1 731.4,449.7 726.6,445.8 723.9,440.2 723.9,434.0 726.6,428.4 731.4,424.5 737.5,423.1 743.6,424.5 748.4,428.4 751.1,434.0" fill="#005A5A"/><text x="738.0" y="440.4" font-family="Liberation Sans" font-size="10.5" fill="#000" text-anchor="middle" textLength="55.2" lengthAdjust="spacingAndGlyphs">CPCI_J5_P_A1</text><polygon points="850.7,441.5 847.3,449.7 841.1,455.9 832.9,459.3 824.1,459.3 815.9,455.9 809.7,449.7 806.3,441.5 806.3,432.7 809.7,424.5 815.9,418.3 824.1,414.9 832.9,414.9 841.1,418.3 847.3,424.5 850.7,432.7" fill="#808080"/><polygon points="842.1,440.2 839.4,445.8 834.6,449.7 828.5,451.1 822.4,449.7 817.6,445.8 814.9,440.2 814.9,434.0 817.6,428.4 822.4,424.5 828.5,423.1 834.6,424.5 839.4,428.4 842.1,434.0" fill="#005A5A"/><text x="829.0" y="440.4" font-family="Liberation Sans" font-size="10.5" fill="#000" text-anchor="middle" textLength="55.2" lengthAdjust="spacingAndGlyphs">CPCI_J5_P_A1</text><polygon points="941.7,441.5 938.3,449.7 932.1,455.9 923.9,459.3 915.1,459.3 906.9,455.9 900.7,449.7 897.3,441.5 897.3,432.7 900.7,424.5 906.9,418.3 915.1,414.9 923.9,414.9 932.1,418.3 938.3,424.5 941.7,432.7" fill="#808080"/><polygon points="933.1,440.2 930.4,445.8 925.6,449.7 919.5,451.1 913.4,449.7 908.6,445.8 905.9,440.2 905.9,434.0 908.6,428.4 913.4,424.5 919.5,423.1 925.6,424.5 930.4,428.4 933.1,434.0" fill="#005A5A"/><text x="920.0" y="440.4" font-family="Liberation Sans" font-size="10.5" fill="#000" text-anchor="middle" textLength="55.2" lengthAdjust="spacingAndGlyphs">CPCI_J5_P_A1</text><polygon points="1032.7,441.5 1029.3,449.7 1023.1,455.9 1014.9,459.3 1006.1,459.3 997.9,455.9 991.7,449.7 988.3,441.5 988.3,432.7 991.7,424.5 997.9,418.3 1006.1,414.9 1014.9,414.9 1023.1,418.3 1029.3,424.5 1032.7,432.7" fill="#808080"/><polygon points="1024.1,440.2 1021.4,445.8 1016.6,449.7 1010.5,451.1 1004.4,449.7 999.6,445.8 996.9,440.2 996.9,434.0 999.6,428.4 1004.4,424.5 1010.5,423.1 1016.6,424.5 1021.4,428.4 1024.1,434.0" fill="#005A5A"/><text x="1011.0" y="440.4" font-family="Liberation Sans" font-size="10.5" fill="#000" text-anchor="middle" textLength="55.2" lengthAdjust="spacingAndGlyphs">CPCI_J5_P_A1</text><polygon points="1123.7,441.5 1120.3,449.7 1114.1,455.9 1105.9,459.3 1097.1,459.3 1088.9,455.9 1082.7,449.7 1079.3,441.5 1079.3,432.7 1082.7,424.5 1088.9,418.3 1097.1,414.9 1105.9,414.9 1114.1,418.3 1120.3,424.5 1123.7,432.7" fill="#808080"/><polygon points="1115.1,440.2 1112.4,445.8 1107.6,449.7 1101.5,451.1 1095.4,449.7 1090.6,445.8 1087.9,440.2 1087.9,434.0 1090.6,428.4 1095.4,424.5 1101.5,423.1 1107.6,424.5 1112.4,428.4 1115.1,434.0" fill="#005A5A"/><text x="1102.0" y="440.4" font-family="Liberation Sans" font-size="10.5" fill="#000" text-anchor="middle" textLength="55.2" lengthAdjust="spacingAndGlyphs">CPCI_J5_P_A1</text><polygon points="1214.7,441.5 1211.3,449.7 1205.1,455.9 1196.9,459.3 1188.1,459.3 1179.9,455.9 1173.7,449.7 1170.3,441.5 1170.3,432.7 1173.7,424.5 1179.9,418.3 1188.1,414.9 1196.9,414.9 1205.1,418.3 1211.3,424.5 1214.7,432.7" fill="#808080"/><polygon points="1206.1,440.2 1203.4,445.8 1198.6,449.7 1192.5,451.1 1186.4,449.7 1181.6,445.8 1178.9,440.2 1178.9,434.0 1181.6,428.4 1186.4,424.5 1192.5,423.1 1198.6,424.5 1203.4,428.4 1206.1,434.0" fill="#005A5A"/><text x="1193.0" y="440.4" font-family="Liberation Sans" font-size="10.5" fill="#000" text-anchor="middle" textLength="55.2" lengthAdjust="spacingAndGlyphs">CPCI_J5_P_A1</text><polygon points="304.7,532.7 301.3,540.9 295.1,547.1 286.9,550.5 278.1,550.5 269.9,547.1 263.7,540.9 260.3,532.7 260.3,523.9 263.7,515.7 269.9,509.5 278.1,506.1 286.9,506.1 295.1,509.5 301.3,515.7 304.7,523.9" fill="#808080"/><polygon points="296.1,531.4 293.4,537.0 288.6,540.9 282.5,542.3 276.4,540.9 271.6,537.0 268.9,531.4 268.9,525.2 271.6,519.6 276.4,515.7 282.5,514.3 288.6,515.7 293.4,519.6 296.1,525.2" fill="#005A5A"/><text x="283.0" y="531.6" font-family="Liberation Sans" font-size="10.5" fill="#000" text-anchor="middle" textLength="55.2" lengthAdjust="spacingAndGlyphs">CPCI_J5_N_A1</text><polygon points="395.7,532.7 392.3,540.9 386.1,547.1 377.9,550.5 369.1,550.5 360.9,547.1 354.7,540.9 351.3,532.7 351.3,523.9 354.7,515.7 360.9,509.5 369.1,506.1 377.9,506.1 386.1,509.5 392.3,515.7 395.7,523.9" fill="#808080"/><polygon points="387.1,531.4 384.4,537.0 379.6,540.9 373.5,542.3 367.4,540.9 362.6,537.0 359.9,531.4 359.9,525.2 362.6,519.6 367.4,515.7 373.5,514.3 379.6,515.7 384.4,519.6 387.1,525.2" fill="#005A5A"/><text x="374.0" y="531.6" font-family="Liberation Sans" font-size="10.5" fill="#000" text-anchor="middle" textLength="55.2" lengthAdjust="spacingAndGlyphs">CPCI_J5_N_A1</text><polygon points="486.7,532.7 483.3,540.9 477.1,547.1 468.9,550.5 460.1,550.5 451.9,547.1 445.7,540.9 442.3,532.7 442.3,523.9 445.7,515.7 451.9,509.5 460.1,506.1 468.9,506.1 477.1,509.5 483.3,515.7 486.7,523.9" fill="#C0C0C0"/><polygon points="478.1,531.4 475.4,537.0 470.6,540.9 464.5,542.3 458.4,540.9 453.6,537.0 450.9,531.4 450.9,525.2 453.6,519.6 458.4,515.7 464.5,514.3 470.6,515.7 475.4,519.6 478.1,525.2" fill="#008C8C"/><text x="465.0" y="531.6" font-family="Liberation Sans" font-size="10.5" fill="#F0E080" text-anchor="middle" textLength="55.2" lengthAdjust="spacingAndGlyphs">CPCI_J5_N_A1</text><polygon points="577.7,532.7 574.3,540.9 568.1,547.1 559.9,550.5 551.1,550.5 542.9,547.1 536.7,540.9 533.3,532.7 533.3,523.9 536.7,515.7 542.9,509.5 551.1,506.1 559.9,506.1 568.1,509.5 574.3,515.7 577.7,523.9" fill="#808080"/><polygon points="569.1,531.4 566.4,537.0 561.6,540.9 555.5,542.3 549.4,540.9 544.6,537.0 541.9,531.4 541.9,525.2 544.6,519.6 549.4,515.7 555.5,514.3 561.6,515.7 566.4,519.6 569.1,525.2" fill="#005A5A"/><text x="556.0" y="531.6" font-family="Liberation Sans" font-size="10.5" fill="#000" text-anchor="middle" textLength="55.2" lengthAdjust="spacingAndGlyphs">CPCI_J5_N_A1</text><polygon points="668.7,532.7 665.3,540.9 659.1,547.1 650.9,550.5 642.1,550.5 633.9,547.1 627.7,540.9 624.3,532.7 624.3,523.9 627.7,515.7 633.9,509.5 642.1,506.1 650.9,506.1 659.1,509.5 665.3,515.7 668.7,523.9" fill="#808080"/><polygon points="660.1,531.4 657.4,537.0 652.6,540.9 646.5,542.3 640.4,540.9 635.6,537.0 632.9,531.4 632.9,525.2 635.6,519.6 640.4,515.7 646.5,514.3 652.6,515.7 657.4,519.6 660.1,525.2" fill="#005A5A"/><text x="647.0" y="531.6" font-family="Liberation Sans" font-size="10.5" fill="#000" text-anchor="middle" textLength="55.2" lengthAdjust="spacingAndGlyphs">CPCI_J5_N_A1</text><polygon points="759.7,532.7 756.3,540.9 750.1,547.1 741.9,550.5 733.1,550.5 724.9,547.1 718.7,540.9 715.3,532.7 715.3,523.9 718.7,515.7 724.9,509.5 733.1,506.1 741.9,506.1 750.1,509.5 756.3,515.7 759.7,523.9" fill="#808080"/><polygon points="751.1,531.4 748.4,537.0 743.6,540.9 737.5,542.3 731.4,540.9 726.6,537.0 723.9,531.4 723.9,525.2 726.6,519.6 731.4,515.7 737.5,514.3 743.6,515.7 748.4,519.6 751.1,525.2" fill="#005A5A"/><text x="738.0" y="531.6" font-family="Liberation Sans" font-size="10.5" fill="#000" text-anchor="middle" textLength="55.2" lengthAdjust="spacingAndGlyphs">CPCI_J5_N_A1</text><polygon points="850.7,532.7 847.3,540.9 841.1,547.1 832.9,550.5 824.1,550.5 815.9,547.1 809.7,540.9 806.3,532.7 806.3,523.9 809.7,515.7 815.9,509.5 824.1,506.1 832.9,506.1 841.1,509.5 847.3,515.7 850.7,523.9" fill="#808080"/><polygon points="842.1,531.4 839.4,537.0 834.6,540.9 828.5,542.3 822.4,540.9 817.6,537.0 814.9,531.4 814.9,525.2 817.6,519.6 822.4,515.7 828.5,514.3 834.6,515.7 839.4,519.6 842.1,525.2" fill="#005A5A"/><text x="829.0" y="531.6" font-family="Liberation Sans" font-size="10.5" fill="#000" text-anchor="middle" textLength="55.2" lengthAdjust="spacingAndGlyphs">CPCI_J5_N_A1</text><polygon points="941.7,532.7 938.3,540.9 932.1,547.1 923.9,550.5 915.1,550.5 906.9,547.1 900.7,540.9 897.3,532.7 897.3,523.9 900.7,515.7 906.9,509.5 915.1,506.1 923.9,506.1 932.1,509.5 938.3,515.7 941.7,523.9" fill="#808080"/><polygon points="933.1,531.4 930.4,537.0 925.6,540.9 919.5,542.3 913.4,540.9 908.6,537.0 905.9,531.4 905.9,525.2 908.6,519.6 913.4,515.7 919.5,514.3 925.6,515.7 930.4,519.6 933.1,525.2" fill="#005A5A"/><text x="920.0" y="531.6" font-family="Liberation Sans" font-size="10.5" fill="#000" text-anchor="middle" textLength="55.2" lengthAdjust="spacingAndGlyphs">CPCI_J5_N_A1</text><polygon points="1032.7,532.7 1029.3,540.9 1023.1,547.1 1014.9,550.5 1006.1,550.5 997.9,547.1 991.7,540.9 988.3,532.7 988.3,523.9 991.7,515.7 997.9,509.5 1006.1,506.1 1014.9,506.1 1023.1,509.5 1029.3,515.7 1032.7,523.9" fill="#808080"/><polygon points="1024.1,531.4 1021.4,537.0 1016.6,540.9 1010.5,542.3 1004.4,540.9 999.6,537.0 996.9,531.4 996.9,525.2 999.6,519.6 1004.4,515.7 1010.5,514.3 1016.6,515.7 1021.4,519.6 1024.1,525.2" fill="#005A5A"/><text x="1011.0" y="531.6" font-family="Liberation Sans" font-size="10.5" fill="#000" text-anchor="middle" textLength="55.2" lengthAdjust="spacingAndGlyphs">CPCI_J5_N_A1</text><polygon points="1123.7,532.7 1120.3,540.9 1114.1,547.1 1105.9,550.5 1097.1,550.5 1088.9,547.1 1082.7,540.9 1079.3,532.7 1079.3,523.9 1082.7,515.7 1088.9,509.5 1097.1,506.1 1105.9,506.1 1114.1,509.5 1120.3,515.7 1123.7,523.9" fill="#808080"/><polygon points="1115.1,531.4 1112.4,537.0 1107.6,540.9 1101.5,542.3 1095.4,540.9 1090.6,537.0 1087.9,531.4 1087.9,525.2 1090.6,519.6 1095.4,515.7 1101.5,514.3 1107.6,515.7 1112.4,519.6 1115.1,525.2" fill="#005A5A"/><text x="1102.0" y="531.6" font-family="Liberation Sans" font-size="10.5" fill="#000" text-anchor="middle" textLength="55.2" lengthAdjust="spacingAndGlyphs">CPCI_J5_N_A1</text><polygon points="1214.7,532.7 1211.3,540.9 1205.1,547.1 1196.9,550.5 1188.1,550.5 1179.9,547.1 1173.7,540.9 1170.3,532.7 1170.3,523.9 1173.7,515.7 1179.9,509.5 1188.1,506.1 1196.9,506.1 1205.1,509.5 1211.3,515.7 1214.7,523.9" fill="#808080"/><polygon points="1206.1,531.4 1203.4,537.0 1198.6,540.9 1192.5,542.3 1186.4,540.9 1181.6,537.0 1178.9,531.4 1178.9,525.2 1181.6,519.6 1186.4,515.7 1192.5,514.3 1198.6,515.7 1203.4,519.6 1206.1,525.2" fill="#005A5A"/><text x="1193.0" y="531.6" font-family="Liberation Sans" font-size="10.5" fill="#000" text-anchor="middle" textLength="55.2" lengthAdjust="spacingAndGlyphs">CPCI_J5_N_A1</text><polygon points="304.7,623.9 301.3,632.1 295.1,638.3 286.9,641.7 278.1,641.7 269.9,638.3 263.7,632.1 260.3,623.9 260.3,615.1 263.7,606.9 269.9,600.7 278.1,597.3 286.9,597.3 295.1,600.7 301.3,606.9 304.7,615.1" fill="#808080"/><polygon points="296.1,622.6 293.4,628.2 288.6,632.1 282.5,633.5 276.4,632.1 271.6,628.2 268.9,622.6 268.9,616.4 271.6,610.8 276.4,606.9 282.5,605.5 288.6,606.9 293.4,610.8 296.1,616.4" fill="#005A5A"/><text x="273.0" y="622.8" font-family="Liberation Sans" font-size="9.6" fill="#000" textLength="17.5" lengthAdjust="spacingAndGlyphs">GND</text><polygon points="395.7,623.9 392.3,632.1 386.1,638.3 377.9,641.7 369.1,641.7 360.9,638.3 354.7,632.1 351.3,623.9 351.3,615.1 354.7,606.9 360.9,600.7 369.1,597.3 377.9,597.3 386.1,600.7 392.3,606.9 395.7,615.1" fill="#808080"/><polygon points="387.1,622.6 384.4,628.2 379.6,632.1 373.5,633.5 367.4,632.1 362.6,628.2 359.9,622.6 359.9,616.4 362.6,610.8 367.4,606.9 373.5,605.5 379.6,606.9 384.4,610.8 387.1,616.4" fill="#005A5A"/><text x="364.0" y="622.8" font-family="Liberation Sans" font-size="9.6" fill="#000" textLength="17.5" lengthAdjust="spacingAndGlyphs">GND</text><polygon points="486.7,623.9 483.3,632.1 477.1,638.3 468.9,641.7 460.1,641.7 451.9,638.3 445.7,632.1 442.3,623.9 442.3,615.1 445.7,606.9 451.9,600.7 460.1,597.3 468.9,597.3 477.1,600.7 483.3,606.9 486.7,615.1" fill="#808080"/><polygon points="478.1,622.6 475.4,628.2 470.6,632.1 464.5,633.5 458.4,632.1 453.6,628.2 450.9,622.6 450.9,616.4 453.6,610.8 458.4,606.9 464.5,605.5 470.6,606.9 475.4,610.8 478.1,616.4" fill="#005A5A"/><text x="455.0" y="622.8" font-family="Liberation Sans" font-size="9.6" fill="#000" textLength="17.5" lengthAdjust="spacingAndGlyphs">GND</text><polygon points="577.7,623.9 574.3,632.1 568.1,638.3 559.9,641.7 551.1,641.7 542.9,638.3 536.7,632.1 533.3,623.9 533.3,615.1 536.7,606.9 542.9,600.7 551.1,597.3 559.9,597.3 568.1,600.7 574.3,606.9 577.7,615.1" fill="#808080"/><polygon points="569.1,622.6 566.4,628.2 561.6,632.1 555.5,633.5 549.4,632.1 544.6,628.2 541.9,622.6 541.9,616.4 544.6,610.8 549.4,606.9 555.5,605.5 561.6,606.9 566.4,610.8 569.1,616.4" fill="#005A5A"/><text x="546.0" y="622.8" font-family="Liberation Sans" font-size="9.6" fill="#000" textLength="17.5" lengthAdjust="spacingAndGlyphs">GND</text><polygon points="668.7,623.9 665.3,632.1 659.1,638.3 650.9,641.7 642.1,641.7 633.9,638.3 627.7,632.1 624.3,623.9 624.3,615.1 627.7,606.9 633.9,600.7 642.1,597.3 650.9,597.3 659.1,600.7 665.3,606.9 668.7,615.1" fill="#808080"/><polygon points="660.1,622.6 657.4,628.2 652.6,632.1 646.5,633.5 640.4,632.1 635.6,628.2 632.9,622.6 632.9,616.4 635.6,610.8 640.4,606.9 646.5,605.5 652.6,606.9 657.4,610.8 660.1,616.4" fill="#005A5A"/><text x="637.0" y="622.8" font-family="Liberation Sans" font-size="9.6" fill="#000" textLength="17.5" lengthAdjust="spacingAndGlyphs">GND</text><polygon points="759.7,623.9 756.3,632.1 750.1,638.3 741.9,641.7 733.1,641.7 724.9,638.3 718.7,632.1 715.3,623.9 715.3,615.1 718.7,606.9 724.9,600.7 733.1,597.3 741.9,597.3 750.1,600.7 756.3,606.9 759.7,615.1" fill="#808080"/><polygon points="751.1,622.6 748.4,628.2 743.6,632.1 737.5,633.5 731.4,632.1 726.6,628.2 723.9,622.6 723.9,616.4 726.6,610.8 731.4,606.9 737.5,605.5 743.6,606.9 748.4,610.8 751.1,616.4" fill="#005A5A"/><text x="728.0" y="622.8" font-family="Liberation Sans" font-size="9.6" fill="#000" textLength="17.5" lengthAdjust="spacingAndGlyphs">GND</text><polygon points="850.7,623.9 847.3,632.1 841.1,638.3 832.9,641.7 824.1,641.7 815.9,638.3 809.7,632.1 806.3,623.9 806.3,615.1 809.7,606.9 815.9,600.7 824.1,597.3 832.9,597.3 841.1,600.7 847.3,606.9 850.7,615.1" fill="#808080"/><polygon points="842.1,622.6 839.4,628.2 834.6,632.1 828.5,633.5 822.4,632.1 817.6,628.2 814.9,622.6 814.9,616.4 817.6,610.8 822.4,606.9 828.5,605.5 834.6,606.9 839.4,610.8 842.1,616.4" fill="#005A5A"/><text x="819.0" y="622.8" font-family="Liberation Sans" font-size="9.6" fill="#000" textLength="17.5" lengthAdjust="spacingAndGlyphs">GND</text><polygon points="941.7,623.9 938.3,632.1 932.1,638.3 923.9,641.7 915.1,641.7 906.9,638.3 900.7,632.1 897.3,623.9 897.3,615.1 900.7,606.9 906.9,600.7 915.1,597.3 923.9,597.3 932.1,600.7 938.3,606.9 941.7,615.1" fill="#808080"/><polygon points="933.1,622.6 930.4,628.2 925.6,632.1 919.5,633.5 913.4,632.1 908.6,628.2 905.9,622.6 905.9,616.4 908.6,610.8 913.4,606.9 919.5,605.5 925.6,606.9 930.4,610.8 933.1,616.4" fill="#005A5A"/><text x="910.0" y="622.8" font-family="Liberation Sans" font-size="9.6" fill="#000" textLength="17.5" lengthAdjust="spacingAndGlyphs">GND</text><polygon points="1032.7,623.9 1029.3,632.1 1023.1,638.3 1014.9,641.7 1006.1,641.7 997.9,638.3 991.7,632.1 988.3,623.9 988.3,615.1 991.7,606.9 997.9,600.7 1006.1,597.3 1014.9,597.3 1023.1,600.7 1029.3,606.9 1032.7,615.1" fill="#808080"/><polygon points="1024.1,622.6 1021.4,628.2 1016.6,632.1 1010.5,633.5 1004.4,632.1 999.6,628.2 996.9,622.6 996.9,616.4 999.6,610.8 1004.4,606.9 1010.5,605.5 1016.6,606.9 1021.4,610.8 1024.1,616.4" fill="#005A5A"/><text x="1001.0" y="622.8" font-family="Liberation Sans" font-size="9.6" fill="#000" textLength="17.5" lengthAdjust="spacingAndGlyphs">GND</text><polygon points="1123.7,623.9 1120.3,632.1 1114.1,638.3 1105.9,641.7 1097.1,641.7 1088.9,638.3 1082.7,632.1 1079.3,623.9 1079.3,615.1 1082.7,606.9 1088.9,600.7 1097.1,597.3 1105.9,597.3 1114.1,600.7 1120.3,606.9 1123.7,615.1" fill="#808080"/><polygon points="1115.1,622.6 1112.4,628.2 1107.6,632.1 1101.5,633.5 1095.4,632.1 1090.6,628.2 1087.9,622.6 1087.9,616.4 1090.6,610.8 1095.4,606.9 1101.5,605.5 1107.6,606.9 1112.4,610.8 1115.1,616.4" fill="#005A5A"/><text x="1092.0" y="622.8" font-family="Liberation Sans" font-size="9.6" fill="#000" textLength="17.5" lengthAdjust="spacingAndGlyphs">GND</text><polygon points="1214.7,623.9 1211.3,632.1 1205.1,638.3 1196.9,641.7 1188.1,641.7 1179.9,638.3 1173.7,632.1 1170.3,623.9 1170.3,615.1 1173.7,606.9 1179.9,600.7 1188.1,597.3 1196.9,597.3 1205.1,600.7 1211.3,606.9 1214.7,615.1" fill="#808080"/><polygon points="1206.1,622.6 1203.4,628.2 1198.6,632.1 1192.5,633.5 1186.4,632.1 1181.6,628.2 1178.9,622.6 1178.9,616.4 1181.6,610.8 1186.4,606.9 1192.5,605.5 1198.6,606.9 1203.4,610.8 1206.1,616.4" fill="#005A5A"/><text x="1183.0" y="622.8" font-family="Liberation Sans" font-size="9.6" fill="#000" textLength="17.5" lengthAdjust="spacingAndGlyphs">GND</text><rect x="581" y="481" width="312" height="78" fill="#000" fill-opacity="0.4"/><path d="M486 424 L510.5 398.5 L722 398.5 L725 402" stroke="#FF0000" stroke-width="6.8" fill="none" stroke-linejoin="miter" stroke-linecap="round"/><text x="596" y="400.5" font-family="Liberation Sans" font-size="5" fill="#FFD0D0" textLength="40" lengthAdjust="spacingAndGlyphs">::::: ulnu.jljl.ju :::::</text><text x="0" y="0" font-family="Liberation Sans" font-size="5" fill="#FFD0D0" textLength="30" lengthAdjust="spacingAndGlyphs" transform="translate(486.5,425) rotate(-45.5)">::ulnu.jljl.ju::</text><clipPath id="cvc"><rect x="282" y="107" width="955" height="701"/></clipPath></g></svg>
<svg style="left:0;top:0" width="1237" height="845" viewBox="0 0 1237 845"><g font-family="Liberation Sans" font-weight="bold" fill="#E8D44C"><text x="583" y="505.6" font-size="25.5" textLength="20" lengthAdjust="spacingAndGlyphs">x:</text><text x="615" y="505.6" font-size="27" textLength="88" lengthAdjust="spacingAndGlyphs">1005.905</text><text x="721" y="505.6" font-size="25.5" textLength="31" lengthAdjust="spacingAndGlyphs">dx:</text><text x="766" y="505.6" font-size="27" textLength="84" lengthAdjust="spacingAndGlyphs">-122.047</text><text x="856" y="505.6" font-size="25.5" textLength="29" lengthAdjust="spacingAndGlyphs">mil</text><text x="583" y="534" font-size="25.5" textLength="20" lengthAdjust="spacingAndGlyphs">y:</text><text x="615" y="534" font-size="27" textLength="82" lengthAdjust="spacingAndGlyphs">-275.591</text><text x="722" y="534" font-size="25.5" textLength="31" lengthAdjust="spacingAndGlyphs">dy:</text><text x="773" y="534" font-size="27" textLength="71" lengthAdjust="spacingAndGlyphs">-43.307</text><text x="856" y="534" font-size="25.5" textLength="29" lengthAdjust="spacingAndGlyphs">mil</text><text x="583" y="553" font-size="15" textLength="213" lengthAdjust="spacingAndGlyphs">Snap: 0.984mil Electrical: 0.984mil</text></g></svg>
<svg style="left:0;top:0" width="1237" height="845" viewBox="0 0 1237 845">
<path d="M1124 784H1150L1160 794H1185" stroke="#0A3070" stroke-width="1.8" fill="none"/>
<path d="M1134 792H1147L1157 802H1199L1204 797" stroke="#0A3070" stroke-width="1.8" fill="none"/>
<g fill="#8A5E20"><rect x="1116" y="780" width="9" height="9" rx="3"/><rect x="1126" y="788" width="9" height="9" rx="3"/><rect x="1185" y="790" width="9" height="9" rx="3"/><rect x="1201" y="790" width="9" height="9" rx="3"/></g>
<g stroke="#000" stroke-width="0.9"><path d="M1118.5 784.5H1122.5M1120.5 782.5V786.5M1128.5 792.5H1132.5M1130.5 790.5V794.5M1187.5 794.5H1191.5M1189.5 792.5V796.5M1203.5 794.5H1207.5M1205.5 792.5V796.5"/></g>
</svg>
<div style="position:absolute;left:282px;top:808px;width:955px;height:17px;background:linear-gradient(to bottom,#F3F1EC,#FEFEFB);"></div>
<div style="position:absolute;left:283px;top:809px;width:15px;height:15px;background:linear-gradient(to bottom,#C8D8F8,#B0C8F0);border:1px solid #A8B8E0;border-radius:2px;"></div>
<svg style="left:287px;top:812px" width="8" height="9"><path d="M6 1L2 4.5L6 8" stroke="#4D6185" stroke-width="2" fill="none"/></svg>
<div style="position:absolute;left:499px;top:809px;width:15px;height:15px;background:linear-gradient(to right,#C8D8F8,#B8CCF4);border:1px solid #A0B4E0;border-radius:2px;"></div>
<svg style="left:502px;top:812px" width="9" height="9"><path d="M1.5 1V8M3.5 1V8M5.5 1V8M7.5 1V8" stroke="#F4F8FF" stroke-width="1"/><path d="M2.5 2V9M4.5 2V9M6.5 2V9M8.5 2V9" stroke="#98B0E0" stroke-width="1"/></svg>
<div style="position:absolute;left:282px;top:825px;width:955px;height:20px;background:#ECE9D8;"></div>
<div style="position:absolute;left:310px;top:828px;width:21px;height:14px;border:1px solid #858585;"></div>
<div style="position:absolute;left:285px;top:828px;width:26px;height:14px;background:#FF0000;border:1px solid #3C3C3C;"></div>
<div style="position:absolute;left:314px;top:830px;font:normal 11px/11px 'Liberation Sans', sans-serif;color:#808080;white-space:nowrap;">LS</div>
<svg style="left:0;top:0" width="1237" height="845" viewBox="0 0 1237 845"><path d="M337.6 826 L342.6 841 L393.9 841 L397.4 826" fill="#ECE9D8" stroke="#000" stroke-width="1"/><path d="M397.5 826 Q395.0 833 399.5 841 L451 841 L454 826" fill="#FFFFFF" stroke="#000" stroke-width="1"/><path d="M455.7 826 Q453.2 833 457.7 841 L510 841 L513 826" fill="#FFFFFF" stroke="#000" stroke-width="1"/><path d="M514 826 Q511.5 833 516 841 L580.3 841 L583.3 826" fill="#FFFFFF" stroke="#000" stroke-width="1"/><path d="M585 826 Q582.5 833 587 841 L652 841 L655 826" fill="#FFFFFF" stroke="#000" stroke-width="1"/><path d="M658.5 826 Q656.0 833 660.5 841 L720 841 L723 826" fill="#FFFFFF" stroke="#000" stroke-width="1"/><path d="M724.5 826 Q722.0 833 726.5 841 L801.4 841 L804.4 826" fill="#FFFFFF" stroke="#000" stroke-width="1"/><path d="M805.6 826 Q803.1 833 807.6 841 L859 841 L862 826" fill="#FFFFFF" stroke="#000" stroke-width="1"/><path d="M863 826 Q860.5 833 865 841 L931 841 L934 826" fill="#FFFFFF" stroke="#000" stroke-width="1"/><path d="M935.6 826 Q933.1 833 937.6 841 L992.4 841 L995.4 826" fill="#FFFFFF" stroke="#000" stroke-width="1"/><path d="M996 826 Q993.5 833 998 841 L1067 841 L1070 826" fill="#FFFFFF" stroke="#000" stroke-width="1"/><path d="M1071 826 Q1068.5 833 1073 841 L1124 841 L1127 826" fill="#FFFFFF" stroke="#000" stroke-width="1"/><path d="M1128.6 826 Q1126.1 833 1130.6 841 L1207.6 841 L1210.6 826" fill="#FFFFFF" stroke="#000" stroke-width="1"/></svg>
<svg style="left:0;top:0" width="1237" height="845"><text x="344.6" y="837" font-family="Liberation Sans" font-size="11.5" fill="#000" textLength="46.8" lengthAdjust="spacingAndGlyphs">Top Layer</text></svg>
<svg style="left:0;top:0" width="1237" height="845"><text x="400.5" y="837" font-family="Liberation Sans" font-size="11.5" fill="#000" textLength="48.5" lengthAdjust="spacingAndGlyphs">MidLayer1</text></svg>
<svg style="left:0;top:0" width="1237" height="845"><text x="458.7" y="837" font-family="Liberation Sans" font-size="11.5" fill="#000" textLength="49.3" lengthAdjust="spacingAndGlyphs">MidLayer2</text></svg>
<svg style="left:0;top:0" width="1237" height="845"><text x="517" y="837" font-family="Liberation Sans" font-size="11.5" fill="#000" textLength="61.3" lengthAdjust="spacingAndGlyphs">Bottom Layer</text></svg>
<svg style="left:0;top:0" width="1237" height="845"><text x="588" y="837" font-family="Liberation Sans" font-size="11.5" fill="#000" textLength="62.0" lengthAdjust="spacingAndGlyphs">Mechanical 1</text></svg>
<svg style="left:0;top:0" width="1237" height="845"><text x="661.5" y="837" font-family="Liberation Sans" font-size="11.5" fill="#000" textLength="56.5" lengthAdjust="spacingAndGlyphs">Top Overlay</text></svg>
<svg style="left:0;top:0" width="1237" height="845"><text x="727.5" y="837" font-family="Liberation Sans" font-size="11.5" fill="#000" textLength="71.9" lengthAdjust="spacingAndGlyphs">Bottom Overlay</text></svg>
<svg style="left:0;top:0" width="1237" height="845"><text x="808.6" y="837" font-family="Liberation Sans" font-size="11.5" fill="#000" textLength="48.4" lengthAdjust="spacingAndGlyphs">Top Paste</text></svg>
<svg style="left:0;top:0" width="1237" height="845"><text x="866" y="837" font-family="Liberation Sans" font-size="11.5" fill="#000" textLength="63.0" lengthAdjust="spacingAndGlyphs">Bottom Paste</text></svg>
<svg style="left:0;top:0" width="1237" height="845"><text x="938.6" y="837" font-family="Liberation Sans" font-size="11.5" fill="#000" textLength="51.8" lengthAdjust="spacingAndGlyphs">Top Solder</text></svg>
<svg style="left:0;top:0" width="1237" height="845"><text x="999" y="837" font-family="Liberation Sans" font-size="11.5" fill="#000" textLength="66.0" lengthAdjust="spacingAndGlyphs">Bottom Solder</text></svg>
<svg style="left:0;top:0" width="1237" height="845"><text x="1074" y="837" font-family="Liberation Sans" font-size="11.5" fill="#000" textLength="48.0" lengthAdjust="spacingAndGlyphs">Drill Guide</text></svg>
<svg style="left:0;top:0" width="1237" height="845"><text x="1131.6" y="837" font-family="Liberation Sans" font-size="11.5" fill="#000" textLength="74.0" lengthAdjust="spacingAndGlyphs">Keep-Out Layer</text></svg>
<svg style="left:0;top:0" width="1237" height="845"><text x="1112" y="834" font-family="Liberation Sans" font-size="29" fill="#6C9ED6" fill-opacity="0.8" stroke="#6C9ED6" stroke-opacity="0.8" stroke-width="1.1" textLength="108" lengthAdjust="spacingAndGlyphs">EDA365</text></svg>
</body></html>
